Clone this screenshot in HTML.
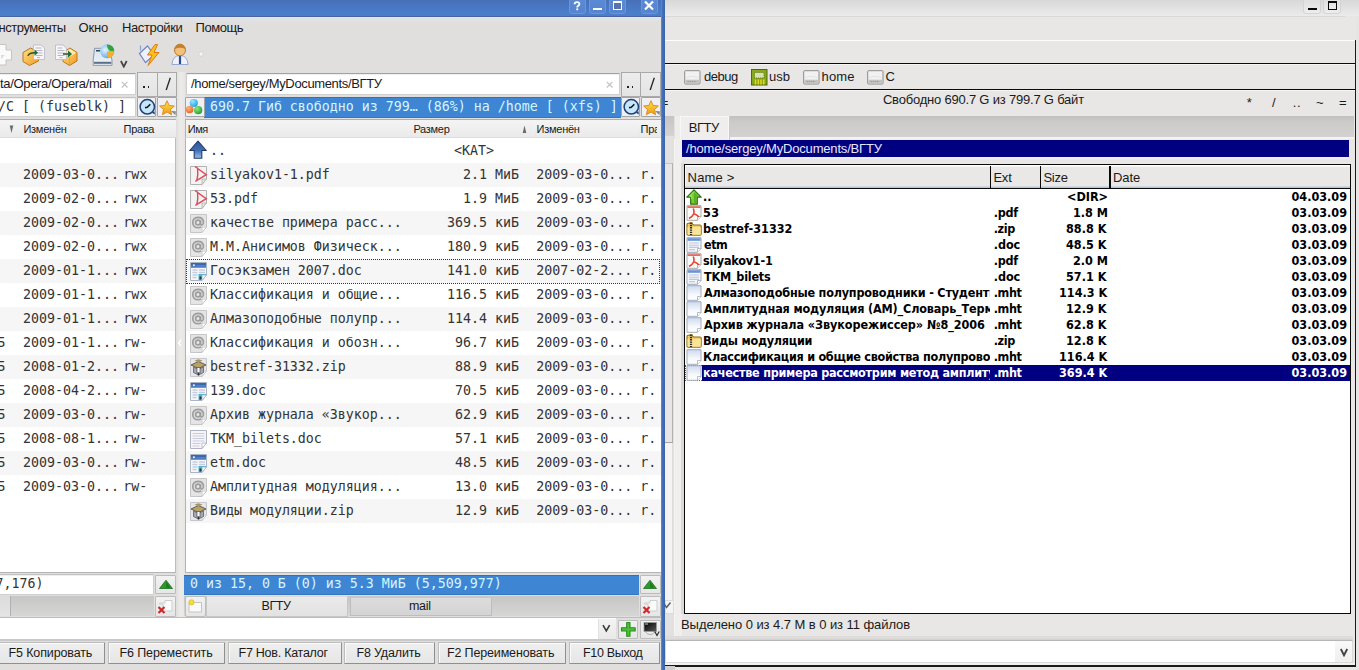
<!DOCTYPE html>
<html><head><meta charset="utf-8"><title>Krusader</title>
<style>
html,body{margin:0;padding:0}
body{width:1359px;height:670px;overflow:hidden;background:#e0dfdd}
#r{position:relative;width:1359px;height:670px;overflow:hidden}
.b{position:absolute;box-sizing:border-box}
.c{position:absolute;overflow:hidden}
.t{position:absolute;white-space:pre;line-height:20px}
</style></head><body><div id="r">
<svg class="b" style="left:0;top:0" width="0" height="0"><defs><linearGradient id="og" x1="0" y1="0" x2="1" y2="1"><stop offset="0" stop-color="#fde08a"/><stop offset="1" stop-color="#f39a1e"/></linearGradient><radialGradient id="gl" cx="0.35" cy="0.4" r="0.75"><stop offset="0" stop-color="#e4f4ff"/><stop offset="0.6" stop-color="#86c0ec"/><stop offset="1" stop-color="#4a90d0"/></radialGradient><linearGradient id="dg" x1="0" y1="0" x2="0" y2="1"><stop offset="0" stop-color="#d4e2ee"/><stop offset="1" stop-color="#eef4fa"/></linearGradient><linearGradient id="sg" x1="0" y1="0" x2="0" y2="1"><stop offset="0" stop-color="#ffe040"/><stop offset="1" stop-color="#ee9a1c"/></linearGradient><radialGradient id="b1" cx=".35" cy=".3" r=".8"><stop offset="0" stop-color="#9ae6ff"/><stop offset="1" stop-color="#189ee0"/></radialGradient><radialGradient id="b2" cx=".35" cy=".3" r=".8"><stop offset="0" stop-color="#ffb080"/><stop offset="1" stop-color="#e8601c"/></radialGradient><radialGradient id="b3" cx=".35" cy=".3" r=".8"><stop offset="0" stop-color="#8ae880"/><stop offset="1" stop-color="#1e9a2c"/></radialGradient><linearGradient id="ub" x1="0" y1="0" x2="0" y2="1"><stop offset="0" stop-color="#2f5590"/><stop offset=".55" stop-color="#3f6fb6"/><stop offset="1" stop-color="#9dbfe8"/></linearGradient><linearGradient id="tg" x1="0" y1="0" x2="1" y2="1"><stop offset="0" stop-color="#000"/><stop offset="1" stop-color="#5a5a5a"/></linearGradient><linearGradient id="mg" x1="0" y1="0" x2="0" y2="1"><stop offset="0" stop-color="#cddaf0"/><stop offset=".6" stop-color="#f6f8fc"/><stop offset="1" stop-color="#fff"/></linearGradient></defs></svg>
<div class="b" style="left:0px;top:0px;width:665px;height:670px;background:#e0dfdd"></div>
<div class="b" style="left:0px;top:0px;width:665px;height:16px;background:linear-gradient(#4770b7,#4b7fcc 85%,#4c7cc6)"></div>
<div class="b" style="left:0px;top:15.5px;width:661px;height:1.2px;background:#4a659e"></div>
<div class="b" style="left:0px;top:16.7px;width:661px;height:1.3px;background:#dde7fa"></div>
<div class="b" style="left:0px;top:18px;width:661px;height:5px;background:linear-gradient(#dfe4ea,#e0dfdd)"></div>
<div class="b" style="left:660.6px;top:0px;width:4.2px;height:670px;background:linear-gradient(90deg,#6a8fd0,#4470b8 35%,#3a64ac)"></div>
<div class="b" style="left:568.5px;top:-3px;width:17.5px;height:16.5px;background:linear-gradient(#5b8ad6,#5684cf);border:1px solid #6b95d8;border-radius:3px"></div>
<div class="b" style="left:588.5px;top:-3px;width:17.0px;height:16.5px;background:linear-gradient(#5b8ad6,#5684cf);border:1px solid #6b95d8;border-radius:3px"></div>
<div class="b" style="left:608.5px;top:-3px;width:17.0px;height:16.5px;background:linear-gradient(#5b8ad6,#5684cf);border:1px solid #6b95d8;border-radius:3px"></div>
<div class="b" style="left:640.5px;top:-3px;width:17.0px;height:16.5px;background:linear-gradient(#5b8ad6,#5684cf);border:1px solid #6b95d8;border-radius:3px"></div>
<svg class="b" style="left:568px;top:0px" width="18" height="14" viewBox="0 0 18 14"><path d="M6.6 4.3 Q6.6 2.2 9 2.2 Q11.4 2.2 11.4 4 Q11.4 5.2 10.1 5.9 Q9.2 6.4 9.2 7.4" fill="none" stroke="#fff" stroke-width="1.8"/><rect x="8.3" y="8.4" width="1.9" height="1.8" fill="#fff"/></svg>
<div class="b" style="left:592.5px;top:8px;width:9.5px;height:2px;background:#fff"></div>
<div class="b" style="left:613px;top:1px;width:9px;height:8.5px;border:1.5px solid #fff;border-top-width:2px;background:#5a74aa"></div>
<svg class="b" style="left:640px;top:0px" width="18" height="14" viewBox="0 0 18 14"><path d="M5 1.5 L13 9.5 M13 1.5 L5 9.5" stroke="#fff" stroke-width="2.2" fill="none"/></svg>
<svg class="b" style="left:0px;top:43px" width="14" height="24" viewBox="0 0 14 24"><path d="M-4 1.5 H6 V7 H11.5 V17 H6 V22 H-4 Z" fill="#fafafa" stroke="#c4c4c4" stroke-width="1"/><path d="M1 12 l4 0 l-4 4z" fill="#ddd"/></svg>
<svg class="b" style="left:22px;top:43px" width="24" height="24" viewBox="0 0 24 24">
<path d="M1 9.5 L8.5 5 L16.5 9 V18 L7.5 22.5 L1 18.5 Z" fill="url(#og)" stroke="#b9781a" stroke-width="1"/>
<path d="M11.5 2 H19 L22.5 5 V16.5 H11.5 Z" fill="#f6f6fb" stroke="#b4b6c6" stroke-width="0.8"/>
<path d="M13.5 5h6M13.5 7.5h7M13.5 10h7M13.5 12.5h7M15 14.6h3" stroke="#b0aebc" stroke-width="0.9"/>
<path d="M6 13 Q6.5 9.7 13 9.7" fill="none" stroke="#1f5a2a" stroke-width="1.4"/><path d="M12.5 6.5 L16 9.7 L12.5 12.8 Z" fill="#1f6a2e"/></svg>
<svg class="b" style="left:54px;top:43px" width="24" height="24" viewBox="0 0 24 24"><path d="M9 9.5 L16 5 L23 9.5 V18 L15.5 22.5 L9 18.5 Z" fill="url(#og)" stroke="#b9781a" stroke-width="1"/><path d="M9.8 9.8 L16 5.9 L22.2 9.8 L15.5 13.8 Z" fill="#fff2c4" opacity=".85"/><path d="M15.5 13.8 V21.5" stroke="#e8a030" stroke-width="0.8"/>
<path d="M1.5 2 H9 L12.3 5 V16.5 H1.5 Z" fill="#f6f6fb" stroke="#b4b6c6" stroke-width="0.8"/>
<path d="M3.5 5h5M3.5 7.5h7M3.5 10h7M3.5 12.5h7M5.5 14.6h3" stroke="#b0aebc" stroke-width="0.9"/>
<path d="M9 11 H15" fill="none" stroke="#1f5a2a" stroke-width="1.5"/><path d="M14 7.5 L18 11 L14 14.5 Z" fill="#1f6a2e"/></svg>
<svg class="b" style="left:92px;top:43px" width="24" height="24" viewBox="0 0 24 24">
<path d="M2.5 5.3 H17 L20 17 V22.3 H1.2 V17 Z" fill="url(#dg)" stroke="#8a97a8" stroke-width="1"/><rect x="2" y="18.8" width="17.3" height="2" fill="#5e6e84"/><rect x="4" y="7" width="4.2" height="1.5" fill="#2e4264"/>
<circle cx="15.2" cy="8.3" r="7" fill="url(#gl)"/><path d="M15 1.6 q6.5 0.3 7.2 6 q-3 1.8-5.3-0.6 q-2.3-2.7-1.9-5.4z" fill="#34a432"/><path d="M14.8 9.5 q3.5-2.3 7.3-0.8 q-0.8 5-4.7 6.3 q-3.2-1.7-2.6-5.5z" fill="#f2b030"/></svg>
<svg class="b" style="left:120px;top:60px" width="8" height="8" viewBox="0 0 8 8"><path d="M0.9 1 L3.8 6.6 L6.7 1" fill="none" stroke="#444" stroke-width="1.8"/></svg>
<svg class="b" style="left:137px;top:43px" width="24" height="24" viewBox="0 0 24 24"><path d="M2.5 10.5 L10.5 3 L17 12 L8.5 19.5 Z" fill="#eef1fb" stroke="#6f86c4" stroke-width="1.2"/><path d="M3.5 2.5 v5" stroke="#8aa0d8" stroke-width="1.2"/>
<path d="M18 1.5 L10.5 12 H15 L11 22.5 L22 9.5 H17 L20.5 1.5 Z" fill="#fbc21c" stroke="#e07a10" stroke-width="1"/></svg>
<svg class="b" style="left:170px;top:43px" width="20" height="24" viewBox="0 0 20 24"><path d="M2 21.5 Q2.5 12.5 10 12.5 Q17.5 12.5 18 21.5 Z" fill="#eef2fc" stroke="#98a8d0" stroke-width="1"/><path d="M10 13 v8" stroke="#2c4a90" stroke-width="2.2"/>
<ellipse cx="10" cy="7" rx="5.5" ry="5.8" fill="#f4c078" stroke="#b87a30" stroke-width="1"/><path d="M4.7 6.2 Q6 1.3 10 1.3 Q14.5 1.3 15.3 6 Q10 3.5 4.7 6.2Z" fill="#c4802c"/></svg>
<svg class="b" style="left:198px;top:51px" width="6" height="6" viewBox="0 0 6 6"><circle cx="3" cy="3" r="2.3" fill="#f4f4f4" stroke="#cfcfcf" stroke-width="0.8"/></svg>
<div class="b" style="left:-10px;top:72.5px;width:146px;height:22.5px;background:#fff;border:1px solid #cfcfcf;border-top-color:#a2a2a2;border-radius:1px;box-shadow:inset 0 1px 1px rgba(0,0,0,.07)"></div>
<div class="b" style="left:185.5px;top:72.5px;width:434.0px;height:22.5px;background:#fff;border:1px solid #cfcfcf;border-top-color:#a2a2a2;border-radius:1px;box-shadow:inset 0 1px 1px rgba(0,0,0,.07)"></div>
<div class="b" style="left:137px;top:71.5px;width:20.5px;height:25.0px;background:linear-gradient(#f2f2f2,#e6e6e6);border:1px solid #b8b8b8;border-radius:2px;border-radius:0;border-color:#a9a9a9;background:linear-gradient(#ececec,#e4e4e4)"></div>
<div class="b" style="left:156.7px;top:71.5px;width:20.3px;height:25.0px;background:linear-gradient(#f2f2f2,#e6e6e6);border:1px solid #b8b8b8;border-radius:2px;border-radius:0;border-color:#a9a9a9;background:linear-gradient(#ececec,#e4e4e4)"></div>
<div class="b" style="left:620.7px;top:71.5px;width:20.3px;height:25.0px;background:linear-gradient(#f2f2f2,#e6e6e6);border:1px solid #b8b8b8;border-radius:2px;border-radius:0;border-color:#a9a9a9;background:linear-gradient(#ececec,#e4e4e4)"></div>
<div class="b" style="left:640.2px;top:71.5px;width:20.5px;height:25.0px;background:linear-gradient(#f2f2f2,#e6e6e6);border:1px solid #b8b8b8;border-radius:2px;border-radius:0;border-color:#a9a9a9;background:linear-gradient(#ececec,#e4e4e4)"></div>
<div class="b" style="left:143.3px;top:86.3px;width:1.6px;height:1.7px;background:#222"></div>
<div class="b" style="left:147.7px;top:86.3px;width:1.6px;height:1.7px;background:#222"></div>
<div class="b" style="left:627.3px;top:86.3px;width:1.6px;height:1.7px;background:#222"></div>
<div class="b" style="left:631.7px;top:86.3px;width:1.6px;height:1.7px;background:#222"></div>
<svg class="b" style="left:165px;top:77px" width="7" height="14" viewBox="0 0 7 14"><path d="M5.3 0.8 L1.2 13" stroke="#222" stroke-width="1.3" fill="none"/></svg>
<svg class="b" style="left:648.5px;top:77px" width="7" height="14" viewBox="0 0 7 14"><path d="M5.3 0.8 L1.2 13" stroke="#222" stroke-width="1.3" fill="none"/></svg>
<svg class="b" style="left:121px;top:80.5px" width="8" height="8" viewBox="0 0 8 8"><path d="M0.8 0.8 L6.5 6.5 M6.5 0.8 L0.8 6.5" stroke="#c2c2c2" stroke-width="1.2" fill="none"/></svg>
<svg class="b" style="left:605.5px;top:80.5px" width="8" height="8" viewBox="0 0 8 8"><path d="M0.8 0.8 L6.5 6.5 M6.5 0.8 L0.8 6.5" stroke="#c2c2c2" stroke-width="1.2" fill="none"/></svg>
<div class="b" style="left:-10px;top:96.5px;width:146px;height:20.5px;background:#fff;border:1px solid #cfcfcf;border-top-color:#c2c2c2;border-radius:1px;box-shadow:inset 0 1px 1px rgba(0,0,0,.07)"></div>
<div class="b" style="left:204px;top:97px;width:416.5px;height:20.5px;background:#3e85d3;border-bottom:1px solid #3676c0;border-top:1px solid #3570b4"></div>
<div class="b" style="left:184.5px;top:97px;width:20.0px;height:19.5px;background:linear-gradient(#f2f2f2,#e6e6e6);border:1px solid #b8b8b8;border-radius:2px;border-color:#a4a4a4;background:#f0f0f4;border-radius:1px"></div>
<div class="b" style="left:136.5px;top:97px;width:19.5px;height:19.5px;background:linear-gradient(#f2f2f2,#e6e6e6);border:1px solid #b8b8b8;border-radius:2px;border-color:#a4a4a4;background:#f0f0f4;border-radius:1px"></div>
<div class="b" style="left:157px;top:97px;width:19.5px;height:19.5px;background:linear-gradient(#f2f2f2,#e6e6e6);border:1px solid #b8b8b8;border-radius:2px;border-color:#a4a4a4;background:#f0f0f4;border-radius:1px"></div>
<div class="b" style="left:620.5px;top:97px;width:19.5px;height:19.5px;background:linear-gradient(#f2f2f2,#e6e6e6);border:1px solid #b8b8b8;border-radius:2px;border-color:#a4a4a4;background:#f0f0f4;border-radius:1px"></div>
<div class="b" style="left:641px;top:97px;width:19.5px;height:19.5px;background:linear-gradient(#f2f2f2,#e6e6e6);border:1px solid #b8b8b8;border-radius:2px;border-color:#a4a4a4;background:#f0f0f4;border-radius:1px"></div>
<svg class="b" style="left:137.5px;top:98px" width="18" height="18" viewBox="0 0 18 18"><circle cx="9.3" cy="8.8" r="7.2" fill="#c6e6fb" stroke="#1f4276" stroke-width="1.5"/><path d="M9.3 9.3 L12.3 6.3 M9.6 9.3 L7 9.6" stroke="#101820" stroke-width="1.6" fill="none"/><path d="M13.8 14.8 l3 1.8 l-0.3-3.3z" fill="#1f4276"/></svg>
<svg class="b" style="left:621.5px;top:98px" width="18" height="18" viewBox="0 0 18 18"><circle cx="9.3" cy="8.8" r="7.2" fill="#c6e6fb" stroke="#1f4276" stroke-width="1.5"/><path d="M9.3 9.3 L12.3 6.3 M9.6 9.3 L7 9.6" stroke="#101820" stroke-width="1.6" fill="none"/><path d="M13.8 14.8 l3 1.8 l-0.3-3.3z" fill="#1f4276"/></svg>
<svg class="b" style="left:158px;top:98px" width="18" height="18" viewBox="0 0 18 18"><path transform="translate(0.9 1.6) scale(0.9)" d="M9 1.2 L11.4 6.5 L17.2 7.1 L12.9 11 L14.1 16.8 L9 13.8 L3.9 16.8 L5.1 11 L0.8 7.1 L6.6 6.5 Z" fill="url(#sg)" stroke="#d8881a" stroke-width="1"/><path d="M13 13 l4.5 4.2 l0.3-4z" fill="#5a5a5a" opacity=".7"/></svg>
<svg class="b" style="left:642px;top:98px" width="18" height="18" viewBox="0 0 18 18"><path transform="translate(0.9 1.6) scale(0.9)" d="M9 1.2 L11.4 6.5 L17.2 7.1 L12.9 11 L14.1 16.8 L9 13.8 L3.9 16.8 L5.1 11 L0.8 7.1 L6.6 6.5 Z" fill="url(#sg)" stroke="#d8881a" stroke-width="1"/><path d="M13 13 l4.5 4.2 l0.3-4z" fill="#5a5a5a" opacity=".7"/></svg>
<svg class="b" style="left:186px;top:98px" width="18" height="18" viewBox="0 0 18 18">
<circle cx="7.8" cy="5" r="4.1" fill="url(#b1)"/><circle cx="3.7" cy="11.5" r="3.8" fill="url(#b2)"/><circle cx="12.2" cy="12.2" r="4.1" fill="url(#b3)"/></svg>
<div class="b" style="left:-2px;top:118.5px;width:178px;height:1.0px;background:#aeaeae"></div>
<div class="b" style="left:185px;top:118.5px;width:476px;height:1.0px;background:#aeaeae"></div>
<div class="b" style="left:-2px;top:119.5px;width:178px;height:18.8px;background:linear-gradient(#f4f4f4,#eaeaea);border-bottom:1px solid #dcdcdc"></div>
<div class="b" style="left:185px;top:119.5px;width:476px;height:18.8px;background:linear-gradient(#f4f4f4,#eaeaea);border-bottom:1px solid #dcdcdc;border-left:1px solid #b4b4b4"></div>
<div class="b" style="left:20.5px;top:121px;width:1.0px;height:17px;background:linear-gradient(#f8f8f8,#e2e2e2)"></div>
<div class="b" style="left:122px;top:121px;width:1px;height:17px;background:linear-gradient(#f8f8f8,#e2e2e2)"></div>
<div class="b" style="left:411px;top:121px;width:1px;height:17px;background:linear-gradient(#f8f8f8,#e2e2e2)"></div>
<div class="b" style="left:534.5px;top:121px;width:1.0px;height:17px;background:linear-gradient(#f8f8f8,#e2e2e2)"></div>
<div class="b" style="left:638px;top:121px;width:1px;height:17px;background:linear-gradient(#f8f8f8,#e2e2e2)"></div>
<svg class="b" style="left:9px;top:125px" width="6" height="9" viewBox="0 0 6 9"><path d="M0.7 0.5 H4.3 L2.5 8 Z" fill="#6a6a6a"/></svg>
<svg class="b" style="left:522px;top:125px" width="6" height="9" viewBox="0 0 6 9"><path d="M0.7 8 H4.3 L2.5 0.5 Z" fill="#6a6a6a"/></svg>
<div class="b" style="left:-2px;top:138.3px;width:178px;height:434.7px;background:#fff;border-right:1px solid #bcbcbc;border-bottom:1px solid #b4b4b4"></div>
<div class="b" style="left:185px;top:138.3px;width:476px;height:434.7px;background:#fff;border-left:1px solid #b4b4b4;border-bottom:1px solid #b4b4b4"></div>
<div class="b" style="left:-2px;top:163px;width:177px;height:24px;background:#f7f6f6"></div>
<div class="b" style="left:186px;top:163px;width:475px;height:24px;background:#f7f6f6"></div>
<div class="b" style="left:-2px;top:211px;width:177px;height:24px;background:#f7f6f6"></div>
<div class="b" style="left:186px;top:211px;width:475px;height:24px;background:#f7f6f6"></div>
<div class="b" style="left:-2px;top:259px;width:177px;height:24px;background:#f7f6f6"></div>
<div class="b" style="left:186px;top:259px;width:475px;height:24px;background:#f7f6f6"></div>
<div class="b" style="left:-2px;top:307px;width:177px;height:24px;background:#f7f6f6"></div>
<div class="b" style="left:186px;top:307px;width:475px;height:24px;background:#f7f6f6"></div>
<div class="b" style="left:-2px;top:355px;width:177px;height:24px;background:#f7f6f6"></div>
<div class="b" style="left:186px;top:355px;width:475px;height:24px;background:#f7f6f6"></div>
<div class="b" style="left:-2px;top:403px;width:177px;height:24px;background:#f7f6f6"></div>
<div class="b" style="left:186px;top:403px;width:475px;height:24px;background:#f7f6f6"></div>
<div class="b" style="left:-2px;top:451px;width:177px;height:24px;background:#f7f6f6"></div>
<div class="b" style="left:186px;top:451px;width:475px;height:24px;background:#f7f6f6"></div>
<div class="b" style="left:186px;top:499px;width:475px;height:24px;background:#f7f6f6"></div>
<div class="b" style="left:177px;top:72px;width:8px;height:545px;background:linear-gradient(90deg,#e2e1df,#ecebea 45%,#e6e5e4)"></div>
<svg class="b" style="left:177px;top:339px" width="6" height="8" viewBox="0 0 6 8"><path d="M4 1 L1.5 4 L4 7" stroke="#fff" stroke-width="1.4" fill="none"/></svg>
<div class="b" style="left:186px;top:259px;width:474px;height:24.5px;border:1px dotted #333"></div>
<svg class="b" style="left:187.7px;top:140px" width="20" height="20" viewBox="0 0 20 20"><path d="M10 1 L18.3 10.5 H13.8 V18.3 H6.2 V10.5 H1.7 Z" fill="url(#ub)" stroke="#1f3a68" stroke-width="1.1" stroke-linejoin="round"/></svg>
<svg class="b" style="left:189px;top:165px" width="19" height="21" viewBox="0 0 19 21"><path d="M1.5 1.5 H17.5 V14 L13 19.5 H1.5 Z" fill="#f3f3f3" stroke="#b2b2b2" stroke-width="1"/><path d="M17.5 14 H13 V19.5 Z" fill="#dfe8df" stroke="#b2b2b2" stroke-width="0.8"/><path d="M6 2.3 Q7.5 1.3 8.3 3.3 L17.3 9.7 L6.3 16.3 M8.6 3.5 Q9.3 10 7.8 15.5" fill="none" stroke="#de4c58" stroke-width="1.45"/></svg>
<svg class="b" style="left:189px;top:189px" width="19" height="21" viewBox="0 0 19 21"><path d="M1.5 1.5 H17.5 V14 L13 19.5 H1.5 Z" fill="#f3f3f3" stroke="#b2b2b2" stroke-width="1"/><path d="M17.5 14 H13 V19.5 Z" fill="#dfe8df" stroke="#b2b2b2" stroke-width="0.8"/><path d="M6 2.3 Q7.5 1.3 8.3 3.3 L17.3 9.7 L6.3 16.3 M8.6 3.5 Q9.3 10 7.8 15.5" fill="none" stroke="#de4c58" stroke-width="1.45"/></svg>
<svg class="b" style="left:189px;top:213px" width="19" height="21" viewBox="0 0 19 21"><path d="M1.5 1.5 H17.5 V14 L13 19.5 H1.5 Z" fill="#e4e4e4" stroke="#c6c6c6" stroke-width="1"/><path d="M17.5 14 H13 V19.5 Z" fill="#fafafa" stroke="#c6c6c6" stroke-width="0.8"/><circle cx="9" cy="9.5" r="2.4" fill="none" stroke="#9e9e9e" stroke-width="1.7"/><path d="M11.5 7 V11 Q11.8 12.3 13 12 Q14.6 11.3 14.5 9 Q14 4.3 9 4.3 Q3.8 4.5 3.8 9.7 Q4 14.7 9.3 14.7 Q11 14.7 12.3 14" fill="none" stroke="#9e9e9e" stroke-width="1.7"/></svg>
<svg class="b" style="left:189px;top:237px" width="19" height="21" viewBox="0 0 19 21"><path d="M1.5 1.5 H17.5 V14 L13 19.5 H1.5 Z" fill="#e4e4e4" stroke="#c6c6c6" stroke-width="1"/><path d="M17.5 14 H13 V19.5 Z" fill="#fafafa" stroke="#c6c6c6" stroke-width="0.8"/><circle cx="9" cy="9.5" r="2.4" fill="none" stroke="#9e9e9e" stroke-width="1.7"/><path d="M11.5 7 V11 Q11.8 12.3 13 12 Q14.6 11.3 14.5 9 Q14 4.3 9 4.3 Q3.8 4.5 3.8 9.7 Q4 14.7 9.3 14.7 Q11 14.7 12.3 14" fill="none" stroke="#9e9e9e" stroke-width="1.7"/></svg>
<svg class="b" style="left:189px;top:261px" width="19" height="21" viewBox="0 0 19 21"><path d="M1.5 1.5 H17.5 V14 L13 19.5 H1.5 Z" fill="#f7f7fa" stroke="#a9b4c4" stroke-width="1"/><path d="M2 2 H17 V6.8 H2 Z" fill="#4f7fc6"/><path d="M2 2 H17 V4 H2Z" fill="#3a69b4"/><rect x="3.5" y="3" width="2.6" height="2.6" fill="#eaf2ff" stroke="#2c56a0" stroke-width="0.6"/>
<path d="M3.5 9 h5 M10 9 h6 M3.5 11.5 h5 M10 11.5 h6 M3.5 14 h5 M3.5 16.5 h4" stroke="#c3cde0" stroke-width="1.3"/><path d="M9.5 13 H17.5 L13 19 H9.5 Z" fill="#48b4d8"/><path d="M10.5 15.5 h4 l-2.3 3 h-1.7z" fill="#2b3a4a"/><path d="M17.5 14 H13 V19.5 Z" fill="#f2f5fa" stroke="#a9b4c4" stroke-width="0.8"/></svg>
<svg class="b" style="left:189px;top:285px" width="19" height="21" viewBox="0 0 19 21"><path d="M1.5 1.5 H17.5 V14 L13 19.5 H1.5 Z" fill="#e4e4e4" stroke="#c6c6c6" stroke-width="1"/><path d="M17.5 14 H13 V19.5 Z" fill="#fafafa" stroke="#c6c6c6" stroke-width="0.8"/><circle cx="9" cy="9.5" r="2.4" fill="none" stroke="#9e9e9e" stroke-width="1.7"/><path d="M11.5 7 V11 Q11.8 12.3 13 12 Q14.6 11.3 14.5 9 Q14 4.3 9 4.3 Q3.8 4.5 3.8 9.7 Q4 14.7 9.3 14.7 Q11 14.7 12.3 14" fill="none" stroke="#9e9e9e" stroke-width="1.7"/></svg>
<svg class="b" style="left:189px;top:309px" width="19" height="21" viewBox="0 0 19 21"><path d="M1.5 1.5 H17.5 V14 L13 19.5 H1.5 Z" fill="#e4e4e4" stroke="#c6c6c6" stroke-width="1"/><path d="M17.5 14 H13 V19.5 Z" fill="#fafafa" stroke="#c6c6c6" stroke-width="0.8"/><circle cx="9" cy="9.5" r="2.4" fill="none" stroke="#9e9e9e" stroke-width="1.7"/><path d="M11.5 7 V11 Q11.8 12.3 13 12 Q14.6 11.3 14.5 9 Q14 4.3 9 4.3 Q3.8 4.5 3.8 9.7 Q4 14.7 9.3 14.7 Q11 14.7 12.3 14" fill="none" stroke="#9e9e9e" stroke-width="1.7"/></svg>
<svg class="b" style="left:189px;top:333px" width="19" height="21" viewBox="0 0 19 21"><path d="M1.5 1.5 H17.5 V14 L13 19.5 H1.5 Z" fill="#e4e4e4" stroke="#c6c6c6" stroke-width="1"/><path d="M17.5 14 H13 V19.5 Z" fill="#fafafa" stroke="#c6c6c6" stroke-width="0.8"/><circle cx="9" cy="9.5" r="2.4" fill="none" stroke="#9e9e9e" stroke-width="1.7"/><path d="M11.5 7 V11 Q11.8 12.3 13 12 Q14.6 11.3 14.5 9 Q14 4.3 9 4.3 Q3.8 4.5 3.8 9.7 Q4 14.7 9.3 14.7 Q11 14.7 12.3 14" fill="none" stroke="#9e9e9e" stroke-width="1.7"/></svg>
<svg class="b" style="left:189px;top:357px" width="19" height="21" viewBox="0 0 19 21"><path d="M1.5 1.5 H17.5 V14 L13 19.5 H1.5 Z" fill="#e6e7ea" stroke="#c6c7cc" stroke-width="1"/><path d="M17.5 14 H13 V19.5 Z" fill="#f6f6f6" stroke="#c6c7cc" stroke-width="0.8"/><path d="M2 8 L9.5 4.5 L17 8 L9.5 11.5Z" fill="#b8a26c" stroke="#5e5034" stroke-width="0.9"/><path d="M5.5 3.5 L9.5 2.3 L13.5 3.5 L9.5 5.5Z" fill="#a8946a"/><path d="M4.5 10 V15.5 L9.5 18 L14.5 15.5 V10 L9.5 12.3Z" fill="#a6a8b4" stroke="#5c5e6a" stroke-width="0.8"/><rect x="8" y="10.5" width="3" height="5.5" fill="#fdfdfd" stroke="#555" stroke-width="0.7"/><path d="M9.5 15.5 v3" stroke="#333" stroke-width="1.5"/></svg>
<svg class="b" style="left:189px;top:381px" width="19" height="21" viewBox="0 0 19 21"><path d="M1.5 1.5 H17.5 V14 L13 19.5 H1.5 Z" fill="#f7f7fa" stroke="#a9b4c4" stroke-width="1"/><path d="M2 2 H17 V6.8 H2 Z" fill="#4f7fc6"/><path d="M2 2 H17 V4 H2Z" fill="#3a69b4"/><rect x="3.5" y="3" width="2.6" height="2.6" fill="#eaf2ff" stroke="#2c56a0" stroke-width="0.6"/>
<path d="M3.5 9 h5 M10 9 h6 M3.5 11.5 h5 M10 11.5 h6 M3.5 14 h5 M3.5 16.5 h4" stroke="#c3cde0" stroke-width="1.3"/><path d="M9.5 13 H17.5 L13 19 H9.5 Z" fill="#48b4d8"/><path d="M10.5 15.5 h4 l-2.3 3 h-1.7z" fill="#2b3a4a"/><path d="M17.5 14 H13 V19.5 Z" fill="#f2f5fa" stroke="#a9b4c4" stroke-width="0.8"/></svg>
<svg class="b" style="left:189px;top:405px" width="19" height="21" viewBox="0 0 19 21"><path d="M1.5 1.5 H17.5 V14 L13 19.5 H1.5 Z" fill="#e4e4e4" stroke="#c6c6c6" stroke-width="1"/><path d="M17.5 14 H13 V19.5 Z" fill="#fafafa" stroke="#c6c6c6" stroke-width="0.8"/><circle cx="9" cy="9.5" r="2.4" fill="none" stroke="#9e9e9e" stroke-width="1.7"/><path d="M11.5 7 V11 Q11.8 12.3 13 12 Q14.6 11.3 14.5 9 Q14 4.3 9 4.3 Q3.8 4.5 3.8 9.7 Q4 14.7 9.3 14.7 Q11 14.7 12.3 14" fill="none" stroke="#9e9e9e" stroke-width="1.7"/></svg>
<svg class="b" style="left:189px;top:429px" width="19" height="21" viewBox="0 0 19 21"><path d="M1.5 1.5 H17.5 V14 L13 19.5 H1.5 Z" fill="#f6f6f9" stroke="#aeb2c2" stroke-width="1"/><path d="M17.5 14 H13 V19.5 Z" fill="#fff" stroke="#aeb2c2" stroke-width="0.8"/><path d="M3.5 4.5h12M3.5 7h12M3.5 9.5h12M3.5 12h12M3.5 14.5h8M3.5 17h7" stroke="#c9cbdc" stroke-width="1"/></svg>
<svg class="b" style="left:189px;top:453px" width="19" height="21" viewBox="0 0 19 21"><path d="M1.5 1.5 H17.5 V14 L13 19.5 H1.5 Z" fill="#f7f7fa" stroke="#a9b4c4" stroke-width="1"/><path d="M2 2 H17 V6.8 H2 Z" fill="#4f7fc6"/><path d="M2 2 H17 V4 H2Z" fill="#3a69b4"/><rect x="3.5" y="3" width="2.6" height="2.6" fill="#eaf2ff" stroke="#2c56a0" stroke-width="0.6"/>
<path d="M3.5 9 h5 M10 9 h6 M3.5 11.5 h5 M10 11.5 h6 M3.5 14 h5 M3.5 16.5 h4" stroke="#c3cde0" stroke-width="1.3"/><path d="M9.5 13 H17.5 L13 19 H9.5 Z" fill="#48b4d8"/><path d="M10.5 15.5 h4 l-2.3 3 h-1.7z" fill="#2b3a4a"/><path d="M17.5 14 H13 V19.5 Z" fill="#f2f5fa" stroke="#a9b4c4" stroke-width="0.8"/></svg>
<svg class="b" style="left:189px;top:477px" width="19" height="21" viewBox="0 0 19 21"><path d="M1.5 1.5 H17.5 V14 L13 19.5 H1.5 Z" fill="#e4e4e4" stroke="#c6c6c6" stroke-width="1"/><path d="M17.5 14 H13 V19.5 Z" fill="#fafafa" stroke="#c6c6c6" stroke-width="0.8"/><circle cx="9" cy="9.5" r="2.4" fill="none" stroke="#9e9e9e" stroke-width="1.7"/><path d="M11.5 7 V11 Q11.8 12.3 13 12 Q14.6 11.3 14.5 9 Q14 4.3 9 4.3 Q3.8 4.5 3.8 9.7 Q4 14.7 9.3 14.7 Q11 14.7 12.3 14" fill="none" stroke="#9e9e9e" stroke-width="1.7"/></svg>
<svg class="b" style="left:189px;top:501px" width="19" height="21" viewBox="0 0 19 21"><path d="M1.5 1.5 H17.5 V14 L13 19.5 H1.5 Z" fill="#e6e7ea" stroke="#c6c7cc" stroke-width="1"/><path d="M17.5 14 H13 V19.5 Z" fill="#f6f6f6" stroke="#c6c7cc" stroke-width="0.8"/><path d="M2 8 L9.5 4.5 L17 8 L9.5 11.5Z" fill="#b8a26c" stroke="#5e5034" stroke-width="0.9"/><path d="M5.5 3.5 L9.5 2.3 L13.5 3.5 L9.5 5.5Z" fill="#a8946a"/><path d="M4.5 10 V15.5 L9.5 18 L14.5 15.5 V10 L9.5 12.3Z" fill="#a6a8b4" stroke="#5c5e6a" stroke-width="0.8"/><rect x="8" y="10.5" width="3" height="5.5" fill="#fdfdfd" stroke="#555" stroke-width="0.7"/><path d="M9.5 15.5 v3" stroke="#333" stroke-width="1.5"/></svg>
<div class="b" style="left:-10px;top:574px;width:163.5px;height:20.5px;background:#fff;border:1px solid #cfcfcf;border-top-color:#c2c2c2;border-radius:1px;box-shadow:inset 0 1px 1px rgba(0,0,0,.07)"></div>
<div class="b" style="left:184px;top:574.5px;width:454.5px;height:20.0px;background:#3e85d3;border-bottom:1px solid #3676c0;border-top:1px solid #3570b4"></div>
<div class="b" style="left:155px;top:575px;width:21px;height:18.5px;background:linear-gradient(#f2f2f2,#e6e6e6);border:1px solid #b8b8b8;border-radius:2px;border-color:#bcbcbc;border-radius:1px"></div>
<svg class="b" style="left:157.5px;top:578.5px" width="16" height="11" viewBox="0 0 16 11"><path d="M1.5 9.5 L8 1.2 L14.5 9.5 Z" fill="#2b9a2b" stroke="#1d6e20" stroke-width="0.8"/><path d="M8 2.5 L12.5 8.8 H8Z" fill="#1f7a22"/></svg>
<div class="b" style="left:639.5px;top:575px;width:21.0px;height:18.5px;background:linear-gradient(#f2f2f2,#e6e6e6);border:1px solid #b8b8b8;border-radius:2px;border-color:#bcbcbc;border-radius:1px"></div>
<svg class="b" style="left:642.0px;top:578.5px" width="16" height="11" viewBox="0 0 16 11"><path d="M1.5 9.5 L8 1.2 L14.5 9.5 Z" fill="#2b9a2b" stroke="#1d6e20" stroke-width="0.8"/><path d="M8 2.5 L12.5 8.8 H8Z" fill="#1f7a22"/></svg>
<div class="b" style="left:-2px;top:595.5px;width:155.5px;height:20.5px;background:linear-gradient(#c6c6c4,#d6d6d4)"></div>
<div class="b" style="left:-2px;top:595.5px;width:13px;height:20.5px;background:linear-gradient(#dcdcdc,#e4e4e4);border-right:1px solid #b0b0b0"></div>
<div class="b" style="left:184px;top:595.5px;width:454.5px;height:20.5px;background:linear-gradient(#c6c6c4,#d6d6d4)"></div>
<div class="b" style="left:206px;top:596px;width:141.5px;height:20.5px;background:linear-gradient(#eaeaea,#e2e2e2);border:1px solid #c6c6c6;border-top-color:#d8d8d8"></div>
<div class="b" style="left:349.5px;top:596.5px;width:142.0px;height:19.5px;background:linear-gradient(#dcdcdc,#d4d4d4);border:1px solid #bdbdbd;border-top-color:#c8c8c8"></div>
<div class="b" style="left:155px;top:596px;width:21px;height:20.5px;background:linear-gradient(#f2f2f2,#e6e6e6);border:1px solid #b8b8b8;border-radius:2px;border-color:#bcbcbc;border-radius:1px"></div>
<svg class="b" style="left:157px;top:598px" width="17" height="17" viewBox="0 0 17 17"><path d="M8 2.5 H15 V13 H6 V6 H2.5 V5 H8Z" fill="#fbfbfb" stroke="#cdcdcd" stroke-width="1"/><path d="M1.5 9 L7.5 15 M7.5 9 L1.5 15" stroke="#d0282c" stroke-width="2.2" fill="none"/></svg>
<div class="b" style="left:639.5px;top:596px;width:21.0px;height:20.5px;background:linear-gradient(#f2f2f2,#e6e6e6);border:1px solid #b8b8b8;border-radius:2px;border-color:#bcbcbc;border-radius:1px"></div>
<svg class="b" style="left:641.5px;top:598px" width="17" height="17" viewBox="0 0 17 17"><path d="M8 2.5 H15 V13 H6 V6 H2.5 V5 H8Z" fill="#fbfbfb" stroke="#cdcdcd" stroke-width="1"/><path d="M1.5 9 L7.5 15 M7.5 9 L1.5 15" stroke="#d0282c" stroke-width="2.2" fill="none"/></svg>
<div class="b" style="left:184.5px;top:596px;width:21.0px;height:20.5px;background:linear-gradient(#f2f2f2,#e6e6e6);border:1px solid #b8b8b8;border-radius:2px;border-color:#bdbdbd"></div>
<svg class="b" style="left:186.5px;top:598px" width="17" height="17" viewBox="0 0 17 17"><path d="M2 4.5 H14.5 V14 H2 Z" fill="#fafafa" stroke="#c4c4c4" stroke-width="1"/><circle cx="4.5" cy="4.3" r="2.6" fill="#f4dc3a" stroke="#d4b418" stroke-width="0.6"/></svg>
<div class="b" style="left:-2px;top:617px;width:663px;height:1px;background:#bdbdbd"></div>
<div class="b" style="left:-2px;top:618px;width:618px;height:21.5px;background:#fff;border-bottom:1px solid #c8c8c8"></div>
<div class="b" style="left:597.5px;top:618.5px;width:18.5px;height:20.5px;background:linear-gradient(#f4f4f4,#e9e9e9);border-left:1px solid #e2e2e2"></div>
<svg class="b" style="left:602px;top:624px" width="9" height="9" viewBox="0 0 9 9"><path d="M1 1.2 L4.3 7 L7.6 1.2" fill="none" stroke="#3a3a3a" stroke-width="1.6"/></svg>
<div class="b" style="left:617.5px;top:619.5px;width:20.5px;height:19.0px;background:linear-gradient(#f2f2f2,#e6e6e6);border:1px solid #b8b8b8;border-radius:2px;border-color:#bcbcbc;border-radius:1px"></div>
<svg class="b" style="left:619.5px;top:621px" width="17" height="17" viewBox="0 0 17 17"><path d="M6.7 1.5 H10 V6.7 H15.2 V10 H10 V15.2 H6.7 V10 H1.5 V6.7 H6.7Z" fill="#48c232" stroke="#2c8c20" stroke-width="1.1" stroke-linejoin="round"/></svg>
<div class="b" style="left:639.5px;top:619.5px;width:21.0px;height:19.0px;background:linear-gradient(#f2f2f2,#e6e6e6);border:1px solid #b8b8b8;border-radius:2px;border-color:#bcbcbc;border-radius:1px"></div>
<svg class="b" style="left:641.5px;top:621px" width="18" height="17" viewBox="0 0 18 17"><rect x="2" y="1.5" width="12.5" height="9" fill="url(#tg)" stroke="#9a9a9a" stroke-width="0.8"/><path d="M3 3 h3" stroke="#fff" stroke-width="0.8"/><path d="M3.5 11 Q8 16 13 11" fill="#eee" stroke="#999" stroke-width="0.8"/><path d="M12.8 10.5 L15 14.5 L17.2 10.5" fill="none" stroke="#333" stroke-width="1.3"/></svg>
<div class="b" style="left:-2px;top:640px;width:663px;height:1px;background:#c9c9c9"></div>
<div class="b" style="left:-12px;top:641.5px;width:117px;height:22.0px;background:linear-gradient(#f2f2f2,#e6e6e6);border:1px solid #b8b8b8;border-radius:2px;border-color:#bdbdbd #8f8f8f #8f8f8f #bdbdbd;border-radius:1px;background:linear-gradient(#efefef,#e6e6e6);box-shadow:inset 1px 1px 0 #fbfbfb"></div>
<div class="b" style="left:108px;top:641.5px;width:117px;height:22.0px;background:linear-gradient(#f2f2f2,#e6e6e6);border:1px solid #b8b8b8;border-radius:2px;border-color:#bdbdbd #8f8f8f #8f8f8f #bdbdbd;border-radius:1px;background:linear-gradient(#efefef,#e6e6e6);box-shadow:inset 1px 1px 0 #fbfbfb"></div>
<div class="b" style="left:228px;top:641.5px;width:113.5px;height:22.0px;background:linear-gradient(#f2f2f2,#e6e6e6);border:1px solid #b8b8b8;border-radius:2px;border-color:#bdbdbd #8f8f8f #8f8f8f #bdbdbd;border-radius:1px;background:linear-gradient(#efefef,#e6e6e6);box-shadow:inset 1px 1px 0 #fbfbfb"></div>
<div class="b" style="left:344px;top:641.5px;width:90.5px;height:22.0px;background:linear-gradient(#f2f2f2,#e6e6e6);border:1px solid #b8b8b8;border-radius:2px;border-color:#bdbdbd #8f8f8f #8f8f8f #bdbdbd;border-radius:1px;background:linear-gradient(#efefef,#e6e6e6);box-shadow:inset 1px 1px 0 #fbfbfb"></div>
<div class="b" style="left:437.5px;top:641.5px;width:128.5px;height:22.0px;background:linear-gradient(#f2f2f2,#e6e6e6);border:1px solid #b8b8b8;border-radius:2px;border-color:#bdbdbd #8f8f8f #8f8f8f #bdbdbd;border-radius:1px;background:linear-gradient(#efefef,#e6e6e6);box-shadow:inset 1px 1px 0 #fbfbfb"></div>
<div class="b" style="left:569px;top:641.5px;width:90.5px;height:22.0px;background:linear-gradient(#f2f2f2,#e6e6e6);border:1px solid #b8b8b8;border-radius:2px;border-color:#bdbdbd #8f8f8f #8f8f8f #bdbdbd;border-radius:1px;background:linear-gradient(#efefef,#e6e6e6);box-shadow:inset 1px 1px 0 #fbfbfb"></div>
<div class="b" style="left:664.8px;top:0px;width:694.2px;height:670px;background:#e8e7e5"></div>
<div class="b" style="left:664.8px;top:0px;width:694.2px;height:16px;background:linear-gradient(#d8d8d8,#ebebeb)"></div>
<div class="b" style="left:665px;top:16px;width:680px;height:1px;background:#d9d9d9"></div>
<div class="b" style="left:1303px;top:-3px;width:18px;height:17px;border:1px solid #d4d4d4;border-radius:3px;background:linear-gradient(#dedede,#ededed)"></div>
<div class="b" style="left:1323px;top:-3px;width:18px;height:17px;border:1px solid #d4d4d4;border-radius:3px;background:linear-gradient(#dedede,#ededed)"></div>
<div class="b" style="left:1307.5px;top:8px;width:9.0px;height:2px;background:#0a0a0a"></div>
<div class="b" style="left:1327.5px;top:1px;width:9.0px;height:8.5px;border:1px solid #0a0a0a;border-top-width:2px"></div>
<div class="b" style="left:665px;top:40px;width:690px;height:1px;background:#fdfdfd"></div>
<div class="b" style="left:665px;top:62.8px;width:691px;height:1.2px;background:#0a0a0a"></div>
<div class="b" style="left:665px;top:64px;width:690px;height:1px;background:#f6f5f4"></div>
<div class="b" style="left:665px;top:88.8px;width:691px;height:1.2px;background:#0a0a0a"></div>
<div class="b" style="left:665px;top:90px;width:690px;height:1px;background:#f6f5f4"></div>
<div class="b" style="left:1355px;top:40px;width:1.2px;height:626px;background:#1a1a1a"></div>
<div class="b" style="left:665px;top:665.4px;width:691px;height:1.3px;background:#1a1a1a"></div>
<div class="b" style="left:1356.2px;top:17px;width:2.8px;height:653px;background:#e6e5e4"></div>
<svg class="b" style="left:683.5px;top:69.5px" width="17" height="15" viewBox="0 0 17 15"><rect x="0.7" y="0.7" width="15.3" height="13.3" rx="0.8" fill="#f2f2f2" stroke="#8c8c8c" stroke-width="1"/><path d="M2 7.5 Q8 5 14.5 7.5" stroke="#e2e2e2" fill="none"/><rect x="1.4" y="9.7" width="14" height="3.5" fill="#c2c2c2"/><path d="M3.5 11.5h8" stroke="#9c9c9c" stroke-width="1.2" stroke-dasharray="1.5 0.7"/></svg>
<svg class="b" style="left:802.5px;top:69.5px" width="17" height="15" viewBox="0 0 17 15"><rect x="0.7" y="0.7" width="15.3" height="13.3" rx="0.8" fill="#f2f2f2" stroke="#8c8c8c" stroke-width="1"/><path d="M2 7.5 Q8 5 14.5 7.5" stroke="#e2e2e2" fill="none"/><rect x="1.4" y="9.7" width="14" height="3.5" fill="#c2c2c2"/><path d="M3.5 11.5h8" stroke="#9c9c9c" stroke-width="1.2" stroke-dasharray="1.5 0.7"/></svg>
<svg class="b" style="left:866.5px;top:69.5px" width="17" height="15" viewBox="0 0 17 15"><rect x="0.7" y="0.7" width="15.3" height="13.3" rx="0.8" fill="#f2f2f2" stroke="#8c8c8c" stroke-width="1"/><path d="M2 7.5 Q8 5 14.5 7.5" stroke="#e2e2e2" fill="none"/><rect x="1.4" y="9.7" width="14" height="3.5" fill="#c2c2c2"/><path d="M3.5 11.5h8" stroke="#9c9c9c" stroke-width="1.2" stroke-dasharray="1.5 0.7"/></svg>
<svg class="b" style="left:750.5px;top:69px" width="17" height="17" viewBox="0 0 17 17"><rect x="0.5" y="0.5" width="15.5" height="15.5" fill="#86a81a" stroke="#4e6a0a" stroke-width="1"/><rect x="3.5" y="3.5" width="9.5" height="5.5" fill="#d8e2b0" stroke="#56700e" stroke-width="0.8" stroke-dasharray="1.2 0.8"/><path d="M4.5 10.5v5M7.3 10.5v5M10 10.5v5M12.7 10.5v5" stroke="#e8dc20" stroke-width="1.4"/></svg>
<div class="b" style="left:665px;top:116px;width:10px;height:524px;background:#e2e1df"></div>
<div class="b" style="left:674px;top:139px;width:1px;height:501px;background:#f4f3f2"></div>
<div class="b" style="left:675px;top:116px;width:678.5px;height:21px;background:linear-gradient(#c2c1bf,#cccbc9 30%,#d3d2d0)"></div>
<div class="b" style="left:664.8px;top:116px;width:9.7px;height:20px;background:linear-gradient(#c6c5c3,#d4d3d1)"></div>
<div class="b" style="left:675px;top:137px;width:678.5px;height:2px;background:#f4f3f2"></div>
<div class="b" style="left:682px;top:138.5px;width:666.5px;height:20.0px;background:#ececfa"></div>
<div class="b" style="left:675px;top:116px;width:6px;height:24px;background:#eeedec"></div>
<div class="b" style="left:680px;top:116px;width:48.5px;height:24px;background:#efeeed;border:1px solid #f8f8f8;border-bottom:none;box-shadow:1px 0 0 #c9c9c9"></div>
<div class="b" style="left:675px;top:139px;width:7px;height:498px;background:#f0efee"></div>
<div class="b" style="left:681px;top:163px;width:3px;height:451px;background:#dad9d7"></div>
<div class="b" style="left:665px;top:163px;width:8px;height:437px;background:#f5f4f3;border-right:1px solid #dcdcdc"></div>
<div class="b" style="left:665px;top:163px;width:7.5px;height:280px;background:#e7e6e4;border-right:1px solid #b2b2b2;border-bottom:1px solid #a4a4a4;border-top:1px solid #c4c4c4"></div>
<div class="b" style="left:665px;top:600px;width:8.5px;height:14px;background:#f4f4f4;border:1px solid #dcdcdc"></div>
<svg class="b" style="left:665px;top:601px" width="8" height="8" viewBox="0 0 8 8"><path d="M-1.5 1.5 L1.5 6.5 L5.5 1.5" fill="none" stroke="#555" stroke-width="1.3"/></svg>
<div class="b" style="left:682px;top:140px;width:666.5px;height:16.5px;background:#000080"></div>
<div class="b" style="left:683.5px;top:164px;width:667.5px;height:450px;background:#fff;border:1.5px solid #0a0a0a"></div>
<div class="b" style="left:685px;top:165.5px;width:664.5px;height:22.0px;background:#e9e8e7;box-shadow:inset 0 -1.5px 0 #b4c6d8, inset 1px 1px 0 #f6f6f6"></div>
<div class="b" style="left:685px;top:187.5px;width:664.5px;height:1.5px;background:#0a0a0a"></div>
<div class="b" style="left:989.5px;top:165.5px;width:1.5px;height:22.5px;background:#0a0a0a"></div>
<div class="b" style="left:1039.5px;top:165.5px;width:1.5px;height:22.5px;background:#0a0a0a"></div>
<div class="b" style="left:1109px;top:165.5px;width:1.5px;height:22.5px;background:#0a0a0a"></div>
<div class="b" style="left:702px;top:365px;width:647.5px;height:16px;background:#000080"></div>
<div class="b" style="left:685px;top:365px;width:17px;height:16px;border:1px dotted #555;border-right:none"></div>
<svg class="b" style="left:686px;top:189px" width="16" height="16" viewBox="0 0 16 16"><path d="M8 0.8 L15.2 8.2 H11.3 V15.2 H4.7 V8.2 H0.8 Z" fill="#78cc34" stroke="#2e7412" stroke-width="1.2" stroke-linejoin="round"/><path d="M8 3 L12.3 7.4 H10.2 V14.2 H8Z" fill="#5cb024"/><path d="M8 2.6 L3.6 7.2 H5.8 V10" fill="none" stroke="#b4ec7c" stroke-width="0.9"/></svg>
<svg class="b" style="left:686px;top:205px" width="16" height="16" viewBox="0 0 16 16"><path d="M1 0.7 H15 V11.5 L11.5 15.3 H1 Z" fill="#fbfbfb" stroke="#a8a8a8" stroke-width="1"/><path d="M15 11.5 H11.5 V15.3" fill="#fff" stroke="#a8a8a8" stroke-width="0.8"/><path d="M1.5 1.2 H14.5 V3 H1.5Z" fill="#e86a5a"/><path d="M7.3 3.5 Q8.6 6.5 7.8 8.8 Q6 12 3 13.5 M7.8 8.8 Q10.5 9.5 13 12" fill="none" stroke="#e2402c" stroke-width="1.6"/></svg>
<svg class="b" style="left:686px;top:221px" width="16" height="16" viewBox="0 0 16 16"><path d="M1 3.5 Q1 2.3 2.2 2.3 H6 L7.5 4 H14 Q15.2 4 15.2 5.2 V13 Q15.2 14.2 14 14.2 H2.2 Q1 14.2 1 13 Z" fill="#f6d06a" stroke="#8e6c14" stroke-width="1.1"/><path d="M1.5 6 H14.8 V13 Q14.8 13.8 14 13.8 H2.2 Q1.5 13.8 1.5 13Z" fill="#fbe49a"/><path d="M5 1.5 v12.5" stroke="#2a2a22" stroke-width="2.2" stroke-dasharray="1.4 0.9"/><path d="M3.5 1.8 h3" stroke="#8e6c14" stroke-width="1"/></svg>
<svg class="b" style="left:686px;top:237px" width="16" height="16" viewBox="0 0 16 16"><path d="M1 0.7 H15 V11.5 L11.5 15.3 H1 Z" fill="#f4f6fb" stroke="#9ca8bc" stroke-width="1"/><path d="M15 11.5 H11.5 V15.3" fill="#fff" stroke="#9ca8bc" stroke-width="0.8"/><path d="M1.5 1.2 H14.5 V3.8 H1.5Z" fill="#6a94d2"/><path d="M3 6h10M3 8.2h10M3 10.4h10M3 12.6h6" stroke="#bcc8de" stroke-width="1.1"/></svg>
<svg class="b" style="left:686px;top:253px" width="16" height="16" viewBox="0 0 16 16"><path d="M1 0.7 H15 V11.5 L11.5 15.3 H1 Z" fill="#fbfbfb" stroke="#a8a8a8" stroke-width="1"/><path d="M15 11.5 H11.5 V15.3" fill="#fff" stroke="#a8a8a8" stroke-width="0.8"/><path d="M1.5 1.2 H14.5 V3 H1.5Z" fill="#e86a5a"/><path d="M7.3 3.5 Q8.6 6.5 7.8 8.8 Q6 12 3 13.5 M7.8 8.8 Q10.5 9.5 13 12" fill="none" stroke="#e2402c" stroke-width="1.6"/></svg>
<svg class="b" style="left:686px;top:269px" width="16" height="16" viewBox="0 0 16 16"><path d="M1 0.7 H15 V11.5 L11.5 15.3 H1 Z" fill="#f4f6fb" stroke="#9ca8bc" stroke-width="1"/><path d="M15 11.5 H11.5 V15.3" fill="#fff" stroke="#9ca8bc" stroke-width="0.8"/><path d="M1.5 1.2 H14.5 V3.8 H1.5Z" fill="#6a94d2"/><path d="M3 6h10M3 8.2h10M3 10.4h10M3 12.6h6" stroke="#bcc8de" stroke-width="1.1"/></svg>
<svg class="b" style="left:686px;top:285px" width="16" height="16" viewBox="0 0 16 16"><path d="M1 0.7 H15 V11.5 L11.5 15.3 H1 Z" fill="url(#mg)" stroke="#a4acbc" stroke-width="1"/><path d="M15 11.5 H11.5 V15.3" fill="#fff" stroke="#a4acbc" stroke-width="0.8"/></svg>
<svg class="b" style="left:686px;top:301px" width="16" height="16" viewBox="0 0 16 16"><path d="M1 0.7 H15 V11.5 L11.5 15.3 H1 Z" fill="url(#mg)" stroke="#a4acbc" stroke-width="1"/><path d="M15 11.5 H11.5 V15.3" fill="#fff" stroke="#a4acbc" stroke-width="0.8"/></svg>
<svg class="b" style="left:686px;top:317px" width="16" height="16" viewBox="0 0 16 16"><path d="M1 0.7 H15 V11.5 L11.5 15.3 H1 Z" fill="url(#mg)" stroke="#a4acbc" stroke-width="1"/><path d="M15 11.5 H11.5 V15.3" fill="#fff" stroke="#a4acbc" stroke-width="0.8"/></svg>
<svg class="b" style="left:686px;top:333px" width="16" height="16" viewBox="0 0 16 16"><path d="M1 3.5 Q1 2.3 2.2 2.3 H6 L7.5 4 H14 Q15.2 4 15.2 5.2 V13 Q15.2 14.2 14 14.2 H2.2 Q1 14.2 1 13 Z" fill="#f6d06a" stroke="#8e6c14" stroke-width="1.1"/><path d="M1.5 6 H14.8 V13 Q14.8 13.8 14 13.8 H2.2 Q1.5 13.8 1.5 13Z" fill="#fbe49a"/><path d="M5 1.5 v12.5" stroke="#2a2a22" stroke-width="2.2" stroke-dasharray="1.4 0.9"/><path d="M3.5 1.8 h3" stroke="#8e6c14" stroke-width="1"/></svg>
<svg class="b" style="left:686px;top:349px" width="16" height="16" viewBox="0 0 16 16"><path d="M1 0.7 H15 V11.5 L11.5 15.3 H1 Z" fill="url(#mg)" stroke="#a4acbc" stroke-width="1"/><path d="M15 11.5 H11.5 V15.3" fill="#fff" stroke="#a4acbc" stroke-width="0.8"/></svg>
<svg class="b" style="left:686px;top:365px" width="16" height="16" viewBox="0 0 16 16"><path d="M1 0.7 H15 V11.5 L11.5 15.3 H1 Z" fill="url(#mg)" stroke="#a4acbc" stroke-width="1"/><path d="M15 11.5 H11.5 V15.3" fill="#fff" stroke="#a4acbc" stroke-width="0.8"/></svg>
<div class="b" style="left:665px;top:635.5px;width:688px;height:1.0px;background:#dbdad8"></div>
<div class="b" style="left:665px;top:637px;width:688px;height:3px;background:linear-gradient(#e4e3e1,#d2d1cf)"></div>
<div class="b" style="left:665px;top:640px;width:688px;height:23px;background:#fff;border:1px solid #d8d8d8;border-top-color:#b6b6b6"></div>
<div class="b" style="left:1335px;top:641px;width:17px;height:21px;background:linear-gradient(#f8f8f8,#efefef)"></div>
<svg class="b" style="left:1339.5px;top:647.5px" width="9" height="9" viewBox="0 0 9 9"><path d="M0.8 1 L4 7.3 L7.2 1" fill="none" stroke="#444" stroke-width="1.9"/></svg>
<div class="b" style="left:665px;top:663px;width:690px;height:2px;background:#f2f1f0"></div>
<div class="b" style="left:665px;top:666px;width:10px;height:4px;background:#d0cfce"></div>
<span class="t" style="left:-1.50px;top:18.00px;font:400 13px/20px 'Liberation Sans',sans-serif;color:#1a1a1a;letter-spacing:-0.450px;">нструменты</span>
<span class="t" style="left:78.50px;top:18.00px;font:400 13px/20px 'Liberation Sans',sans-serif;color:#1a1a1a;letter-spacing:-0.167px;">Окно</span>
<span class="t" style="left:121.90px;top:18.00px;font:400 13px/20px 'Liberation Sans',sans-serif;color:#1a1a1a;letter-spacing:-0.363px;">Настройки</span>
<span class="t" style="left:195.50px;top:18.00px;font:400 13px/20px 'Liberation Sans',sans-serif;color:#1a1a1a;letter-spacing:-0.450px;">Помощь</span>
<span class="t" style="left:0.00px;top:74.00px;font:400 13px/20px 'Liberation Sans',sans-serif;color:#1a1a1a;letter-spacing:-0.333px;">ta/Opera/Opera/mail</span>
<span class="t" style="left:191.00px;top:74.00px;font:400 13px/20px 'Liberation Sans',sans-serif;color:#1a1a1a;letter-spacing:-0.357px;">/home/sergey/MyDocuments/ВГТУ</span>
<span class="t" style="left:-1.90px;top:97.00px;font:400 13.3px/20px 'DejaVu Sans Mono','Liberation Mono',monospace;color:#333;letter-spacing:-0.007px;">/C [ (fuseblk) ]</span>
<span class="t" style="left:209.90px;top:97.00px;font:400 13.3px/20px 'DejaVu Sans Mono','Liberation Mono',monospace;color:#d4f6ff;letter-spacing:-0.007px;">690.7 Гиб свободно из 799… (86%) на /home [ (xfs) ]</span>
<span class="t" style="left:23.40px;top:119.00px;font:400 11px/20px 'Liberation Sans',sans-serif;color:#1a1a1a;letter-spacing:-0.233px;">Изменён</span>
<span class="t" style="left:123.50px;top:119.00px;font:400 11px/20px 'Liberation Sans',sans-serif;color:#1a1a1a;letter-spacing:-0.250px;">Права</span>
<span class="t" style="left:187.70px;top:119.00px;font:400 11px/20px 'Liberation Sans',sans-serif;color:#1a1a1a;letter-spacing:-0.450px;">Имя</span>
<span class="t" style="left:413.40px;top:119.00px;font:400 11px/20px 'Liberation Sans',sans-serif;color:#1a1a1a;letter-spacing:-0.280px;">Размер</span>
<span class="t" style="left:536.50px;top:119.00px;font:400 11px/20px 'Liberation Sans',sans-serif;color:#1a1a1a;letter-spacing:-0.250px;">Изменён</span>
<div class="c" style="left:640px;top:120px;width:17px;height:19px"><span class="t" style="left:0.50px;top:-1.00px;font:400 11px/20px 'Liberation Sans',sans-serif;color:#1a1a1a;letter-spacing:-0.250px;">Права</span></div>
<span class="t" style="left:23.10px;top:165.00px;font:400 13.3px/20px 'DejaVu Sans Mono','Liberation Mono',monospace;color:#333;letter-spacing:-0.007px;">2009-03-0...</span>
<span class="t" style="left:123.30px;top:165.00px;font:400 13.3px/20px 'DejaVu Sans Mono','Liberation Mono',monospace;color:#333;letter-spacing:-0.007px;">rwx</span>
<span class="t" style="left:23.10px;top:189.00px;font:400 13.3px/20px 'DejaVu Sans Mono','Liberation Mono',monospace;color:#333;letter-spacing:-0.007px;">2009-02-0...</span>
<span class="t" style="left:123.30px;top:189.00px;font:400 13.3px/20px 'DejaVu Sans Mono','Liberation Mono',monospace;color:#333;letter-spacing:-0.007px;">rwx</span>
<span class="t" style="left:23.10px;top:213.00px;font:400 13.3px/20px 'DejaVu Sans Mono','Liberation Mono',monospace;color:#333;letter-spacing:-0.007px;">2009-02-0...</span>
<span class="t" style="left:123.30px;top:213.00px;font:400 13.3px/20px 'DejaVu Sans Mono','Liberation Mono',monospace;color:#333;letter-spacing:-0.007px;">rwx</span>
<span class="t" style="left:23.10px;top:237.00px;font:400 13.3px/20px 'DejaVu Sans Mono','Liberation Mono',monospace;color:#333;letter-spacing:-0.007px;">2009-02-0...</span>
<span class="t" style="left:123.30px;top:237.00px;font:400 13.3px/20px 'DejaVu Sans Mono','Liberation Mono',monospace;color:#333;letter-spacing:-0.007px;">rwx</span>
<span class="t" style="left:23.10px;top:261.00px;font:400 13.3px/20px 'DejaVu Sans Mono','Liberation Mono',monospace;color:#333;letter-spacing:-0.007px;">2009-01-1...</span>
<span class="t" style="left:123.30px;top:261.00px;font:400 13.3px/20px 'DejaVu Sans Mono','Liberation Mono',monospace;color:#333;letter-spacing:-0.007px;">rwx</span>
<span class="t" style="left:23.10px;top:285.00px;font:400 13.3px/20px 'DejaVu Sans Mono','Liberation Mono',monospace;color:#333;letter-spacing:-0.007px;">2009-01-1...</span>
<span class="t" style="left:123.30px;top:285.00px;font:400 13.3px/20px 'DejaVu Sans Mono','Liberation Mono',monospace;color:#333;letter-spacing:-0.007px;">rwx</span>
<span class="t" style="left:23.10px;top:309.00px;font:400 13.3px/20px 'DejaVu Sans Mono','Liberation Mono',monospace;color:#333;letter-spacing:-0.007px;">2009-01-1...</span>
<span class="t" style="left:123.30px;top:309.00px;font:400 13.3px/20px 'DejaVu Sans Mono','Liberation Mono',monospace;color:#333;letter-spacing:-0.007px;">rwx</span>
<span class="t" style="left:23.10px;top:333.00px;font:400 13.3px/20px 'DejaVu Sans Mono','Liberation Mono',monospace;color:#333;letter-spacing:-0.007px;">2009-01-1...</span>
<span class="t" style="left:123.30px;top:333.00px;font:400 13.3px/20px 'DejaVu Sans Mono','Liberation Mono',monospace;color:#333;letter-spacing:-0.007px;">rw-</span>
<span class="t" style="left:-2.90px;top:333.00px;font:400 13.3px/20px 'DejaVu Sans Mono','Liberation Mono',monospace;color:#333;letter-spacing:-0.007px;">Б</span>
<span class="t" style="left:23.10px;top:357.00px;font:400 13.3px/20px 'DejaVu Sans Mono','Liberation Mono',monospace;color:#333;letter-spacing:-0.007px;">2008-01-2...</span>
<span class="t" style="left:123.30px;top:357.00px;font:400 13.3px/20px 'DejaVu Sans Mono','Liberation Mono',monospace;color:#333;letter-spacing:-0.007px;">rw-</span>
<span class="t" style="left:-2.90px;top:357.00px;font:400 13.3px/20px 'DejaVu Sans Mono','Liberation Mono',monospace;color:#333;letter-spacing:-0.007px;">Б</span>
<span class="t" style="left:23.10px;top:381.00px;font:400 13.3px/20px 'DejaVu Sans Mono','Liberation Mono',monospace;color:#333;letter-spacing:-0.007px;">2008-04-2...</span>
<span class="t" style="left:123.30px;top:381.00px;font:400 13.3px/20px 'DejaVu Sans Mono','Liberation Mono',monospace;color:#333;letter-spacing:-0.007px;">rw-</span>
<span class="t" style="left:-2.90px;top:381.00px;font:400 13.3px/20px 'DejaVu Sans Mono','Liberation Mono',monospace;color:#333;letter-spacing:-0.007px;">Б</span>
<span class="t" style="left:23.10px;top:405.00px;font:400 13.3px/20px 'DejaVu Sans Mono','Liberation Mono',monospace;color:#333;letter-spacing:-0.007px;">2009-03-0...</span>
<span class="t" style="left:123.30px;top:405.00px;font:400 13.3px/20px 'DejaVu Sans Mono','Liberation Mono',monospace;color:#333;letter-spacing:-0.007px;">rw-</span>
<span class="t" style="left:-2.90px;top:405.00px;font:400 13.3px/20px 'DejaVu Sans Mono','Liberation Mono',monospace;color:#333;letter-spacing:-0.007px;">Б</span>
<span class="t" style="left:23.10px;top:429.00px;font:400 13.3px/20px 'DejaVu Sans Mono','Liberation Mono',monospace;color:#333;letter-spacing:-0.007px;">2008-08-1...</span>
<span class="t" style="left:123.30px;top:429.00px;font:400 13.3px/20px 'DejaVu Sans Mono','Liberation Mono',monospace;color:#333;letter-spacing:-0.007px;">rw-</span>
<span class="t" style="left:-2.90px;top:429.00px;font:400 13.3px/20px 'DejaVu Sans Mono','Liberation Mono',monospace;color:#333;letter-spacing:-0.007px;">Б</span>
<span class="t" style="left:23.10px;top:453.00px;font:400 13.3px/20px 'DejaVu Sans Mono','Liberation Mono',monospace;color:#333;letter-spacing:-0.007px;">2009-03-0...</span>
<span class="t" style="left:123.30px;top:453.00px;font:400 13.3px/20px 'DejaVu Sans Mono','Liberation Mono',monospace;color:#333;letter-spacing:-0.007px;">rw-</span>
<span class="t" style="left:-2.90px;top:453.00px;font:400 13.3px/20px 'DejaVu Sans Mono','Liberation Mono',monospace;color:#333;letter-spacing:-0.007px;">Б</span>
<span class="t" style="left:23.10px;top:477.00px;font:400 13.3px/20px 'DejaVu Sans Mono','Liberation Mono',monospace;color:#333;letter-spacing:-0.007px;">2009-03-0...</span>
<span class="t" style="left:123.30px;top:477.00px;font:400 13.3px/20px 'DejaVu Sans Mono','Liberation Mono',monospace;color:#333;letter-spacing:-0.007px;">rw-</span>
<span class="t" style="left:-2.90px;top:477.00px;font:400 13.3px/20px 'DejaVu Sans Mono','Liberation Mono',monospace;color:#333;letter-spacing:-0.007px;">Б</span>
<span class="t" style="left:209.90px;top:141.00px;font:400 13.3px/20px 'DejaVu Sans Mono','Liberation Mono',monospace;color:#333;letter-spacing:-0.007px;">..</span>
<span class="t" style="left:453.90px;top:141.00px;font:400 13.3px/20px 'DejaVu Sans Mono','Liberation Mono',monospace;color:#333;letter-spacing:-0.007px;">&lt;КАТ&gt;</span>
<span class="t" style="left:209.90px;top:165.00px;font:400 13.3px/20px 'DejaVu Sans Mono','Liberation Mono',monospace;color:#333;letter-spacing:-0.007px;">silyakov1-1.pdf</span>
<span class="t" style="left:462.90px;top:165.00px;font:400 13.3px/20px 'DejaVu Sans Mono','Liberation Mono',monospace;color:#333;letter-spacing:-0.007px;">2.1 МиБ</span>
<span class="t" style="left:536.30px;top:165.00px;font:400 13.3px/20px 'DejaVu Sans Mono','Liberation Mono',monospace;color:#333;letter-spacing:-0.007px;">2009-03-0...</span>
<div class="c" style="left:638px;top:163px;width:18.5px;height:24px"><span class="t" style="left:2.30px;top:2.00px;font:400 13.3px/20px 'DejaVu Sans Mono','Liberation Mono',monospace;color:#333;letter-spacing:-0.007px;">r..</span></div>
<span class="t" style="left:209.90px;top:189.00px;font:400 13.3px/20px 'DejaVu Sans Mono','Liberation Mono',monospace;color:#333;letter-spacing:-0.007px;">53.pdf</span>
<span class="t" style="left:462.90px;top:189.00px;font:400 13.3px/20px 'DejaVu Sans Mono','Liberation Mono',monospace;color:#333;letter-spacing:-0.007px;">1.9 МиБ</span>
<span class="t" style="left:536.30px;top:189.00px;font:400 13.3px/20px 'DejaVu Sans Mono','Liberation Mono',monospace;color:#333;letter-spacing:-0.007px;">2009-03-0...</span>
<div class="c" style="left:638px;top:187px;width:18.5px;height:24px"><span class="t" style="left:2.30px;top:2.00px;font:400 13.3px/20px 'DejaVu Sans Mono','Liberation Mono',monospace;color:#333;letter-spacing:-0.007px;">r..</span></div>
<span class="t" style="left:209.90px;top:213.00px;font:400 13.3px/20px 'DejaVu Sans Mono','Liberation Mono',monospace;color:#333;letter-spacing:-0.007px;">качестве примера расс...</span>
<span class="t" style="left:446.90px;top:213.00px;font:400 13.3px/20px 'DejaVu Sans Mono','Liberation Mono',monospace;color:#333;letter-spacing:-0.007px;">369.5 киБ</span>
<span class="t" style="left:536.30px;top:213.00px;font:400 13.3px/20px 'DejaVu Sans Mono','Liberation Mono',monospace;color:#333;letter-spacing:-0.007px;">2009-03-0...</span>
<div class="c" style="left:638px;top:211px;width:18.5px;height:24px"><span class="t" style="left:2.30px;top:2.00px;font:400 13.3px/20px 'DejaVu Sans Mono','Liberation Mono',monospace;color:#333;letter-spacing:-0.007px;">r..</span></div>
<span class="t" style="left:209.90px;top:237.00px;font:400 13.3px/20px 'DejaVu Sans Mono','Liberation Mono',monospace;color:#333;letter-spacing:-0.007px;">М.М.Анисимов Физическ...</span>
<span class="t" style="left:446.90px;top:237.00px;font:400 13.3px/20px 'DejaVu Sans Mono','Liberation Mono',monospace;color:#333;letter-spacing:-0.007px;">180.9 киБ</span>
<span class="t" style="left:536.30px;top:237.00px;font:400 13.3px/20px 'DejaVu Sans Mono','Liberation Mono',monospace;color:#333;letter-spacing:-0.007px;">2009-03-0...</span>
<div class="c" style="left:638px;top:235px;width:18.5px;height:24px"><span class="t" style="left:2.30px;top:2.00px;font:400 13.3px/20px 'DejaVu Sans Mono','Liberation Mono',monospace;color:#333;letter-spacing:-0.007px;">r..</span></div>
<span class="t" style="left:209.90px;top:261.00px;font:400 13.3px/20px 'DejaVu Sans Mono','Liberation Mono',monospace;color:#333;letter-spacing:-0.007px;">Госэкзамен 2007.doc</span>
<span class="t" style="left:446.90px;top:261.00px;font:400 13.3px/20px 'DejaVu Sans Mono','Liberation Mono',monospace;color:#333;letter-spacing:-0.007px;">141.0 киБ</span>
<span class="t" style="left:536.30px;top:261.00px;font:400 13.3px/20px 'DejaVu Sans Mono','Liberation Mono',monospace;color:#333;letter-spacing:-0.007px;">2007-02-2...</span>
<div class="c" style="left:638px;top:259px;width:18.5px;height:24px"><span class="t" style="left:2.30px;top:2.00px;font:400 13.3px/20px 'DejaVu Sans Mono','Liberation Mono',monospace;color:#333;letter-spacing:-0.007px;">r..</span></div>
<span class="t" style="left:209.90px;top:285.00px;font:400 13.3px/20px 'DejaVu Sans Mono','Liberation Mono',monospace;color:#333;letter-spacing:-0.007px;">Классификация и общие...</span>
<span class="t" style="left:446.90px;top:285.00px;font:400 13.3px/20px 'DejaVu Sans Mono','Liberation Mono',monospace;color:#333;letter-spacing:-0.007px;">116.5 киБ</span>
<span class="t" style="left:536.30px;top:285.00px;font:400 13.3px/20px 'DejaVu Sans Mono','Liberation Mono',monospace;color:#333;letter-spacing:-0.007px;">2009-03-0...</span>
<div class="c" style="left:638px;top:283px;width:18.5px;height:24px"><span class="t" style="left:2.30px;top:2.00px;font:400 13.3px/20px 'DejaVu Sans Mono','Liberation Mono',monospace;color:#333;letter-spacing:-0.007px;">r..</span></div>
<span class="t" style="left:209.90px;top:309.00px;font:400 13.3px/20px 'DejaVu Sans Mono','Liberation Mono',monospace;color:#333;letter-spacing:-0.007px;">Алмазоподобные полупр...</span>
<span class="t" style="left:446.90px;top:309.00px;font:400 13.3px/20px 'DejaVu Sans Mono','Liberation Mono',monospace;color:#333;letter-spacing:-0.007px;">114.4 киБ</span>
<span class="t" style="left:536.30px;top:309.00px;font:400 13.3px/20px 'DejaVu Sans Mono','Liberation Mono',monospace;color:#333;letter-spacing:-0.007px;">2009-03-0...</span>
<div class="c" style="left:638px;top:307px;width:18.5px;height:24px"><span class="t" style="left:2.30px;top:2.00px;font:400 13.3px/20px 'DejaVu Sans Mono','Liberation Mono',monospace;color:#333;letter-spacing:-0.007px;">r..</span></div>
<span class="t" style="left:209.90px;top:333.00px;font:400 13.3px/20px 'DejaVu Sans Mono','Liberation Mono',monospace;color:#333;letter-spacing:-0.007px;">Классификация и обозн...</span>
<span class="t" style="left:454.90px;top:333.00px;font:400 13.3px/20px 'DejaVu Sans Mono','Liberation Mono',monospace;color:#333;letter-spacing:-0.007px;">96.7 киБ</span>
<span class="t" style="left:536.30px;top:333.00px;font:400 13.3px/20px 'DejaVu Sans Mono','Liberation Mono',monospace;color:#333;letter-spacing:-0.007px;">2009-03-0...</span>
<div class="c" style="left:638px;top:331px;width:18.5px;height:24px"><span class="t" style="left:2.30px;top:2.00px;font:400 13.3px/20px 'DejaVu Sans Mono','Liberation Mono',monospace;color:#333;letter-spacing:-0.007px;">r..</span></div>
<span class="t" style="left:209.90px;top:357.00px;font:400 13.3px/20px 'DejaVu Sans Mono','Liberation Mono',monospace;color:#333;letter-spacing:-0.007px;">bestref-31332.zip</span>
<span class="t" style="left:454.90px;top:357.00px;font:400 13.3px/20px 'DejaVu Sans Mono','Liberation Mono',monospace;color:#333;letter-spacing:-0.007px;">88.9 киБ</span>
<span class="t" style="left:536.30px;top:357.00px;font:400 13.3px/20px 'DejaVu Sans Mono','Liberation Mono',monospace;color:#333;letter-spacing:-0.007px;">2009-03-0...</span>
<div class="c" style="left:638px;top:355px;width:18.5px;height:24px"><span class="t" style="left:2.30px;top:2.00px;font:400 13.3px/20px 'DejaVu Sans Mono','Liberation Mono',monospace;color:#333;letter-spacing:-0.007px;">r..</span></div>
<span class="t" style="left:209.90px;top:381.00px;font:400 13.3px/20px 'DejaVu Sans Mono','Liberation Mono',monospace;color:#333;letter-spacing:-0.007px;">139.doc</span>
<span class="t" style="left:454.90px;top:381.00px;font:400 13.3px/20px 'DejaVu Sans Mono','Liberation Mono',monospace;color:#333;letter-spacing:-0.007px;">70.5 киБ</span>
<span class="t" style="left:536.30px;top:381.00px;font:400 13.3px/20px 'DejaVu Sans Mono','Liberation Mono',monospace;color:#333;letter-spacing:-0.007px;">2009-03-0...</span>
<div class="c" style="left:638px;top:379px;width:18.5px;height:24px"><span class="t" style="left:2.30px;top:2.00px;font:400 13.3px/20px 'DejaVu Sans Mono','Liberation Mono',monospace;color:#333;letter-spacing:-0.007px;">r..</span></div>
<span class="t" style="left:209.90px;top:405.00px;font:400 13.3px/20px 'DejaVu Sans Mono','Liberation Mono',monospace;color:#333;letter-spacing:-0.007px;">Архив журнала «Звукор...</span>
<span class="t" style="left:454.90px;top:405.00px;font:400 13.3px/20px 'DejaVu Sans Mono','Liberation Mono',monospace;color:#333;letter-spacing:-0.007px;">62.9 киБ</span>
<span class="t" style="left:536.30px;top:405.00px;font:400 13.3px/20px 'DejaVu Sans Mono','Liberation Mono',monospace;color:#333;letter-spacing:-0.007px;">2009-03-0...</span>
<div class="c" style="left:638px;top:403px;width:18.5px;height:24px"><span class="t" style="left:2.30px;top:2.00px;font:400 13.3px/20px 'DejaVu Sans Mono','Liberation Mono',monospace;color:#333;letter-spacing:-0.007px;">r..</span></div>
<span class="t" style="left:209.90px;top:429.00px;font:400 13.3px/20px 'DejaVu Sans Mono','Liberation Mono',monospace;color:#333;letter-spacing:-0.007px;">TKM_bilets.doc</span>
<span class="t" style="left:454.90px;top:429.00px;font:400 13.3px/20px 'DejaVu Sans Mono','Liberation Mono',monospace;color:#333;letter-spacing:-0.007px;">57.1 киБ</span>
<span class="t" style="left:536.30px;top:429.00px;font:400 13.3px/20px 'DejaVu Sans Mono','Liberation Mono',monospace;color:#333;letter-spacing:-0.007px;">2009-03-0...</span>
<div class="c" style="left:638px;top:427px;width:18.5px;height:24px"><span class="t" style="left:2.30px;top:2.00px;font:400 13.3px/20px 'DejaVu Sans Mono','Liberation Mono',monospace;color:#333;letter-spacing:-0.007px;">r..</span></div>
<span class="t" style="left:209.90px;top:453.00px;font:400 13.3px/20px 'DejaVu Sans Mono','Liberation Mono',monospace;color:#333;letter-spacing:-0.007px;">etm.doc</span>
<span class="t" style="left:454.90px;top:453.00px;font:400 13.3px/20px 'DejaVu Sans Mono','Liberation Mono',monospace;color:#333;letter-spacing:-0.007px;">48.5 киБ</span>
<span class="t" style="left:536.30px;top:453.00px;font:400 13.3px/20px 'DejaVu Sans Mono','Liberation Mono',monospace;color:#333;letter-spacing:-0.007px;">2009-03-0...</span>
<div class="c" style="left:638px;top:451px;width:18.5px;height:24px"><span class="t" style="left:2.30px;top:2.00px;font:400 13.3px/20px 'DejaVu Sans Mono','Liberation Mono',monospace;color:#333;letter-spacing:-0.007px;">r..</span></div>
<span class="t" style="left:209.90px;top:477.00px;font:400 13.3px/20px 'DejaVu Sans Mono','Liberation Mono',monospace;color:#333;letter-spacing:-0.007px;">Амплитудная модуляция...</span>
<span class="t" style="left:454.90px;top:477.00px;font:400 13.3px/20px 'DejaVu Sans Mono','Liberation Mono',monospace;color:#333;letter-spacing:-0.007px;">13.0 киБ</span>
<span class="t" style="left:536.30px;top:477.00px;font:400 13.3px/20px 'DejaVu Sans Mono','Liberation Mono',monospace;color:#333;letter-spacing:-0.007px;">2009-03-0...</span>
<div class="c" style="left:638px;top:475px;width:18.5px;height:24px"><span class="t" style="left:2.30px;top:2.00px;font:400 13.3px/20px 'DejaVu Sans Mono','Liberation Mono',monospace;color:#333;letter-spacing:-0.007px;">r..</span></div>
<span class="t" style="left:209.90px;top:501.00px;font:400 13.3px/20px 'DejaVu Sans Mono','Liberation Mono',monospace;color:#333;letter-spacing:-0.007px;">Виды модуляции.zip</span>
<span class="t" style="left:454.90px;top:501.00px;font:400 13.3px/20px 'DejaVu Sans Mono','Liberation Mono',monospace;color:#333;letter-spacing:-0.007px;">12.9 киБ</span>
<span class="t" style="left:536.30px;top:501.00px;font:400 13.3px/20px 'DejaVu Sans Mono','Liberation Mono',monospace;color:#333;letter-spacing:-0.007px;">2009-03-0...</span>
<div class="c" style="left:638px;top:499px;width:18.5px;height:24px"><span class="t" style="left:2.30px;top:2.00px;font:400 13.3px/20px 'DejaVu Sans Mono','Liberation Mono',monospace;color:#333;letter-spacing:-0.007px;">r..</span></div>
<span class="t" style="left:-4.40px;top:574.00px;font:400 13.3px/20px 'DejaVu Sans Mono','Liberation Mono',monospace;color:#333;letter-spacing:-0.007px;">7,176)</span>
<span class="t" style="left:189.90px;top:574.00px;font:400 13.3px/20px 'DejaVu Sans Mono','Liberation Mono',monospace;color:#d4f6ff;letter-spacing:-0.007px;">0 из 15, 0 Б (0) из 5.3 МиБ (5,509,977)</span>
<span class="t" style="left:261.50px;top:596.00px;font:400 12.5px/20px 'Liberation Sans',sans-serif;color:#1a1a1a;letter-spacing:-0.450px;">ВГТУ</span>
<span class="t" style="left:409.00px;top:596.00px;font:400 12.5px/20px 'Liberation Sans',sans-serif;color:#1a1a1a;letter-spacing:-0.333px;">mail</span>
<span class="t" style="left:8.50px;top:643.00px;font:400 12.5px/20px 'Liberation Sans',sans-serif;color:#1a1a1a;letter-spacing:-0.125px;">F5 Копировать</span>
<span class="t" style="left:119.50px;top:643.00px;font:400 12.5px/20px 'Liberation Sans',sans-serif;color:#1a1a1a;letter-spacing:-0.115px;">F6 Переместить</span>
<span class="t" style="left:238.50px;top:643.00px;font:400 12.5px/20px 'Liberation Sans',sans-serif;color:#1a1a1a;letter-spacing:-0.250px;">F7 Нов. Каталог</span>
<span class="t" style="left:356.50px;top:643.00px;font:400 12.5px/20px 'Liberation Sans',sans-serif;color:#1a1a1a;letter-spacing:-0.167px;">F8 Удалить</span>
<span class="t" style="left:447.00px;top:643.00px;font:400 12.5px/20px 'Liberation Sans',sans-serif;color:#1a1a1a;letter-spacing:-0.153px;">F2 Переименовать</span>
<span class="t" style="left:583.00px;top:643.00px;font:400 12.5px/20px 'Liberation Sans',sans-serif;color:#1a1a1a;letter-spacing:-0.312px;">F10 Выход</span>
<span class="t" style="left:703.90px;top:67.00px;font:400 13px/20px 'Liberation Sans',sans-serif;color:#1a1a1a;letter-spacing:-0.425px;">debug</span>
<span class="t" style="left:769.00px;top:67.00px;font:400 13px/20px 'Liberation Sans',sans-serif;color:#1a1a1a;">usb</span>
<span class="t" style="left:821.50px;top:67.00px;font:400 13px/20px 'Liberation Sans',sans-serif;color:#1a1a1a;letter-spacing:0.167px;">home</span>
<span class="t" style="left:885.50px;top:67.00px;font:400 13px/20px 'Liberation Sans',sans-serif;color:#1a1a1a;">C</span>
<span class="t" style="left:882.90px;top:90.00px;font:400 13px/20px 'Liberation Sans',sans-serif;color:#1a1a1a;letter-spacing:-0.203px;">Свободно 690.7 G из 799.7 G байт</span>
<span class="t" style="left:1246.70px;top:93.00px;font:400 13px/20px 'Liberation Sans',sans-serif;color:#1a1a1a;">*</span>
<span class="t" style="left:1272.00px;top:93.00px;font:400 13px/20px 'Liberation Sans',sans-serif;color:#1a1a1a;">/</span>
<span class="t" style="left:1292.80px;top:93.00px;font:400 13px/20px 'Liberation Sans',sans-serif;color:#1a1a1a;letter-spacing:0.550px;">..</span>
<span class="t" style="left:1316.00px;top:93.00px;font:400 13px/20px 'Liberation Sans',sans-serif;color:#1a1a1a;">~</span>
<span class="t" style="left:1339.00px;top:93.00px;font:400 13px/20px 'Liberation Sans',sans-serif;color:#1a1a1a;">=</span>
<div class="c" style="left:665px;top:95px;width:10px;height:17px"><span class="t" style="left:-4.30px;top:-2.00px;font:400 13px/20px 'Liberation Sans',sans-serif;color:#1a1a1a;">=</span></div>
<span class="t" style="left:688.70px;top:118.00px;font:400 13px/20px 'Liberation Sans',sans-serif;color:#1a1a1a;letter-spacing:-0.450px;">ВГТУ</span>
<span class="t" style="left:686.00px;top:139.00px;font:400 13px/20px 'Liberation Sans',sans-serif;color:#e8e8ff;letter-spacing:-0.179px;">/home/sergey/MyDocuments/ВГТУ</span>
<span class="t" style="left:687.60px;top:168.00px;font:400 13px/20px 'Liberation Sans',sans-serif;color:#1a1a1a;letter-spacing:0.180px;">Name &gt;</span>
<span class="t" style="left:993.40px;top:168.00px;font:400 13px/20px 'Liberation Sans',sans-serif;color:#1a1a1a;letter-spacing:-0.200px;">Ext</span>
<span class="t" style="left:1043.40px;top:168.00px;font:400 13px/20px 'Liberation Sans',sans-serif;color:#1a1a1a;letter-spacing:-0.233px;">Size</span>
<span class="t" style="left:1113.00px;top:168.00px;font:400 13px/20px 'Liberation Sans',sans-serif;color:#1a1a1a;letter-spacing:-0.100px;">Date</span>
<div class="c" style="left:703px;top:189px;width:286.5px;height:16px"><span class="t" style="left:0.00px;top:-2.00px;font:700 12.5px/20px 'DejaVu Sans Condensed','DejaVu Sans',sans-serif;color:#000;">..</span></div>
<span class="t" style="left:1067.00px;top:187.00px;font:700 12.5px/20px 'DejaVu Sans Condensed','DejaVu Sans',sans-serif;color:#000;">&lt;DIR&gt;</span>
<span class="t" style="left:1291.50px;top:187.00px;font:700 12.5px/20px 'DejaVu Sans Condensed','DejaVu Sans',sans-serif;color:#000;">04.03.09</span>
<div class="c" style="left:703px;top:205px;width:286.5px;height:16px"><span class="t" style="left:0.00px;top:-2.00px;font:700 12.5px/20px 'DejaVu Sans Condensed','DejaVu Sans',sans-serif;color:#000;letter-spacing:0.550px;">53</span></div>
<span class="t" style="left:993.70px;top:203.00px;font:700 12.5px/20px 'DejaVu Sans Condensed','DejaVu Sans',sans-serif;color:#000;letter-spacing:-0.233px;">.pdf</span>
<span class="t" style="left:1073.00px;top:203.00px;font:700 12.5px/20px 'DejaVu Sans Condensed','DejaVu Sans',sans-serif;color:#000;">1.8 M</span>
<span class="t" style="left:1291.50px;top:203.00px;font:700 12.5px/20px 'DejaVu Sans Condensed','DejaVu Sans',sans-serif;color:#000;">03.03.09</span>
<div class="c" style="left:703px;top:221px;width:286.5px;height:16px"><span class="t" style="left:0.00px;top:-2.00px;font:700 12.5px/20px 'DejaVu Sans Condensed','DejaVu Sans',sans-serif;color:#000;">bestref-31332</span></div>
<span class="t" style="left:993.70px;top:219.00px;font:700 12.5px/20px 'DejaVu Sans Condensed','DejaVu Sans',sans-serif;color:#000;letter-spacing:-0.400px;">.zip</span>
<span class="t" style="left:1066.00px;top:219.00px;font:700 12.5px/20px 'DejaVu Sans Condensed','DejaVu Sans',sans-serif;color:#000;">88.8 K</span>
<span class="t" style="left:1291.50px;top:219.00px;font:700 12.5px/20px 'DejaVu Sans Condensed','DejaVu Sans',sans-serif;color:#000;">03.03.09</span>
<div class="c" style="left:703px;top:237px;width:286.5px;height:16px"><span class="t" style="left:1.00px;top:-2.00px;font:700 12.5px/20px 'DejaVu Sans Condensed','DejaVu Sans',sans-serif;color:#000;letter-spacing:-0.450px;">etm</span></div>
<span class="t" style="left:993.70px;top:235.00px;font:700 12.5px/20px 'DejaVu Sans Condensed','DejaVu Sans',sans-serif;color:#000;letter-spacing:-0.067px;">.doc</span>
<span class="t" style="left:1066.00px;top:235.00px;font:700 12.5px/20px 'DejaVu Sans Condensed','DejaVu Sans',sans-serif;color:#000;">48.5 K</span>
<span class="t" style="left:1291.50px;top:235.00px;font:700 12.5px/20px 'DejaVu Sans Condensed','DejaVu Sans',sans-serif;color:#000;">03.03.09</span>
<div class="c" style="left:703px;top:253px;width:286.5px;height:16px"><span class="t" style="left:0.00px;top:-2.00px;font:700 12.5px/20px 'DejaVu Sans Condensed','DejaVu Sans',sans-serif;color:#000;letter-spacing:-0.210px;">silyakov1-1</span></div>
<span class="t" style="left:993.70px;top:251.00px;font:700 12.5px/20px 'DejaVu Sans Condensed','DejaVu Sans',sans-serif;color:#000;letter-spacing:-0.233px;">.pdf</span>
<span class="t" style="left:1073.00px;top:251.00px;font:700 12.5px/20px 'DejaVu Sans Condensed','DejaVu Sans',sans-serif;color:#000;">2.0 M</span>
<span class="t" style="left:1291.50px;top:251.00px;font:700 12.5px/20px 'DejaVu Sans Condensed','DejaVu Sans',sans-serif;color:#000;">03.03.09</span>
<div class="c" style="left:703px;top:269px;width:286.5px;height:16px"><span class="t" style="left:1.00px;top:-2.00px;font:700 12.5px/20px 'DejaVu Sans Condensed','DejaVu Sans',sans-serif;color:#000;letter-spacing:-0.222px;">TKM_bilets</span></div>
<span class="t" style="left:993.70px;top:267.00px;font:700 12.5px/20px 'DejaVu Sans Condensed','DejaVu Sans',sans-serif;color:#000;letter-spacing:-0.067px;">.doc</span>
<span class="t" style="left:1066.00px;top:267.00px;font:700 12.5px/20px 'DejaVu Sans Condensed','DejaVu Sans',sans-serif;color:#000;">57.1 K</span>
<span class="t" style="left:1291.50px;top:267.00px;font:700 12.5px/20px 'DejaVu Sans Condensed','DejaVu Sans',sans-serif;color:#000;">03.03.09</span>
<div class="c" style="left:703px;top:285px;width:286.5px;height:16px"><span class="t" style="left:1.00px;top:-2.00px;font:700 12.5px/20px 'DejaVu Sans Condensed','DejaVu Sans',sans-serif;color:#000;letter-spacing:-0.203px;">Алмазоподобные полупроводники - Студенты</span></div>
<span class="t" style="left:993.70px;top:283.00px;font:700 12.5px/20px 'DejaVu Sans Condensed','DejaVu Sans',sans-serif;color:#000;letter-spacing:-0.400px;">.mht</span>
<span class="t" style="left:1059.00px;top:283.00px;font:700 12.5px/20px 'DejaVu Sans Condensed','DejaVu Sans',sans-serif;color:#000;">114.3 K</span>
<span class="t" style="left:1291.50px;top:283.00px;font:700 12.5px/20px 'DejaVu Sans Condensed','DejaVu Sans',sans-serif;color:#000;">03.03.09</span>
<div class="c" style="left:703px;top:301px;width:286.5px;height:16px"><span class="t" style="left:1.00px;top:-2.00px;font:700 12.5px/20px 'DejaVu Sans Condensed','DejaVu Sans',sans-serif;color:#000;letter-spacing:-0.151px;">Амплитудная модуляция (АМ)_Словарь_Терм</span></div>
<span class="t" style="left:993.70px;top:299.00px;font:700 12.5px/20px 'DejaVu Sans Condensed','DejaVu Sans',sans-serif;color:#000;letter-spacing:-0.400px;">.mht</span>
<span class="t" style="left:1066.00px;top:299.00px;font:700 12.5px/20px 'DejaVu Sans Condensed','DejaVu Sans',sans-serif;color:#000;">12.9 K</span>
<span class="t" style="left:1291.50px;top:299.00px;font:700 12.5px/20px 'DejaVu Sans Condensed','DejaVu Sans',sans-serif;color:#000;">03.03.09</span>
<div class="c" style="left:703px;top:317px;width:286.5px;height:16px"><span class="t" style="left:1.00px;top:-2.00px;font:700 12.5px/20px 'DejaVu Sans Condensed','DejaVu Sans',sans-serif;color:#000;letter-spacing:-0.056px;">Архив журнала «Звукорежиссер» №8_2006</span></div>
<span class="t" style="left:993.70px;top:315.00px;font:700 12.5px/20px 'DejaVu Sans Condensed','DejaVu Sans',sans-serif;color:#000;letter-spacing:-0.400px;">.mht</span>
<span class="t" style="left:1066.00px;top:315.00px;font:700 12.5px/20px 'DejaVu Sans Condensed','DejaVu Sans',sans-serif;color:#000;">62.8 K</span>
<span class="t" style="left:1291.50px;top:315.00px;font:700 12.5px/20px 'DejaVu Sans Condensed','DejaVu Sans',sans-serif;color:#000;">03.03.09</span>
<div class="c" style="left:703px;top:333px;width:286.5px;height:16px"><span class="t" style="left:0.00px;top:-2.00px;font:700 12.5px/20px 'DejaVu Sans Condensed','DejaVu Sans',sans-serif;color:#000;letter-spacing:-0.231px;">Виды модуляции</span></div>
<span class="t" style="left:993.70px;top:331.00px;font:700 12.5px/20px 'DejaVu Sans Condensed','DejaVu Sans',sans-serif;color:#000;letter-spacing:-0.400px;">.zip</span>
<span class="t" style="left:1066.00px;top:331.00px;font:700 12.5px/20px 'DejaVu Sans Condensed','DejaVu Sans',sans-serif;color:#000;">12.8 K</span>
<span class="t" style="left:1291.50px;top:331.00px;font:700 12.5px/20px 'DejaVu Sans Condensed','DejaVu Sans',sans-serif;color:#000;">03.03.09</span>
<div class="c" style="left:703px;top:349px;width:286.5px;height:16px"><span class="t" style="left:0.00px;top:-2.00px;font:700 12.5px/20px 'DejaVu Sans Condensed','DejaVu Sans',sans-serif;color:#000;letter-spacing:-0.264px;">Классификация и общие свойства полупрово</span></div>
<span class="t" style="left:993.70px;top:347.00px;font:700 12.5px/20px 'DejaVu Sans Condensed','DejaVu Sans',sans-serif;color:#000;letter-spacing:-0.400px;">.mht</span>
<span class="t" style="left:1059.00px;top:347.00px;font:700 12.5px/20px 'DejaVu Sans Condensed','DejaVu Sans',sans-serif;color:#000;">116.4 K</span>
<span class="t" style="left:1291.50px;top:347.00px;font:700 12.5px/20px 'DejaVu Sans Condensed','DejaVu Sans',sans-serif;color:#000;">03.03.09</span>
<div class="c" style="left:703px;top:365px;width:286.5px;height:16px"><span class="t" style="left:0.00px;top:-2.00px;font:700 12.5px/20px 'DejaVu Sans Condensed','DejaVu Sans',sans-serif;color:#fff;letter-spacing:-0.251px;">качестве примера рассмотрим метод амплиту</span></div>
<span class="t" style="left:993.70px;top:363.00px;font:700 12.5px/20px 'DejaVu Sans Condensed','DejaVu Sans',sans-serif;color:#fff;letter-spacing:-0.400px;">.mht</span>
<span class="t" style="left:1059.00px;top:363.00px;font:700 12.5px/20px 'DejaVu Sans Condensed','DejaVu Sans',sans-serif;color:#fff;">369.4 K</span>
<span class="t" style="left:1291.50px;top:363.00px;font:700 12.5px/20px 'DejaVu Sans Condensed','DejaVu Sans',sans-serif;color:#fff;">03.03.09</span>
<span class="t" style="left:681.00px;top:615.00px;font:400 13px/20px 'Liberation Sans',sans-serif;color:#1a1a1a;letter-spacing:-0.063px;">Выделено 0 из 4.7 М в 0 из 11 файлов</span>
</div></body></html>
